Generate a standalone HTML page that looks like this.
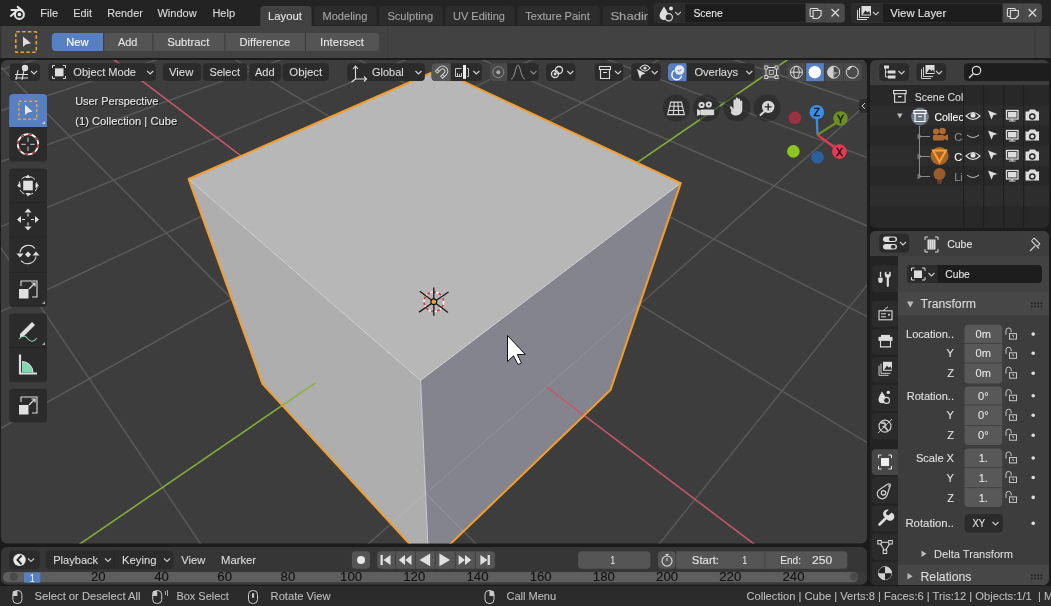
<!DOCTYPE html><html><head><meta charset="utf-8"><style>html,body{margin:0;padding:0;background:#1b1b1b;overflow:hidden}svg{display:block;will-change:transform}text{font-family:"Liberation Sans",sans-serif}</style></head><body>
<svg width="1051" height="606" viewBox="0 0 1051 606">
<defs><clipPath id="vp"><rect x="1" y="60" width="866" height="483.6" rx="6"/></clipPath><clipPath id="ol"><rect x="870" y="60" width="179" height="168" rx="6"/></clipPath><clipPath id="pp"><rect x="870" y="231" width="179" height="354" rx="6"/></clipPath><clipPath id="tl"><rect x="1" y="547" width="866" height="37.5" rx="6"/></clipPath></defs>
<rect x="0.00" y="0.00" width="1051.00" height="606.00" rx="0.00" fill="#1b1b1b" />
<rect x="0.00" y="0.00" width="1051.00" height="26.00" rx="0.00" fill="#232323" />
<g stroke="#e6e6e6" stroke-width="2" fill="none" stroke-linecap="round"><circle cx="19.4" cy="14.4" r="4.5"/><path d="M11.4 9.9 H19.5 M17.6 6.9 L22.2 10.6 M10.9 15.9 L15.4 12.1"/></g><circle cx="19.4" cy="14.4" r="1.9" fill="#e6e6e6"/>
<text x="40.30" y="16.80" font-size="11.70" fill="#dcdcdc" stroke="#dcdcdc" stroke-width="0.1" textLength="17.89" lengthAdjust="spacingAndGlyphs">File</text>
<text x="73.30" y="16.80" font-size="11.70" fill="#dcdcdc" stroke="#dcdcdc" stroke-width="0.1" textLength="18.71" lengthAdjust="spacingAndGlyphs">Edit</text>
<text x="107.20" y="16.80" font-size="11.70" fill="#dcdcdc" stroke="#dcdcdc" stroke-width="0.1" textLength="35.60" lengthAdjust="spacingAndGlyphs">Render</text>
<text x="157.40" y="16.80" font-size="11.70" fill="#dcdcdc" stroke="#dcdcdc" stroke-width="0.1" textLength="39.36" lengthAdjust="spacingAndGlyphs">Window</text>
<text x="212.40" y="16.80" font-size="11.70" fill="#dcdcdc" stroke="#dcdcdc" stroke-width="0.1" textLength="22.69" lengthAdjust="spacingAndGlyphs">Help</text>
<path d="M260.3 26 L260.3 10 Q260.3 6 264.3 6 L307.6 6 Q311.6 6 311.6 10 L311.6 26 Z" fill="#424242"/>
<path d="M314.2 25 L314.2 10 Q314.2 6 318.2 6 L372.6 6 Q376.6 6 376.6 10 L376.6 25 Z" fill="#2c2c2c"/>
<path d="M379.2 25 L379.2 10 Q379.2 6 383.2 6 L438.7 6 Q442.7 6 442.7 10 L442.7 25 Z" fill="#2c2c2c"/>
<path d="M445.2 25 L445.2 10 Q445.2 6 449.2 6 L510.4 6 Q514.4 6 514.4 10 L514.4 25 Z" fill="#2c2c2c"/>
<path d="M517.5 25 L517.5 10 Q517.5 6 521.5 6 L595.9 6 Q599.9 6 599.9 10 L599.9 25 Z" fill="#2c2c2c"/>
<path d="M602.8 25 L602.8 10 Q602.8 6 606.8 6 L644.0 6 Q648.0 6 648.0 10 L648.0 25 Z" fill="#2c2c2c"/>
<clipPath id="shc"><rect x="600" y="0" width="48" height="26"/></clipPath>
<text x="268.00" y="19.50" font-size="11.70" fill="#e6e6e6" stroke="#e6e6e6" stroke-width="0.1" textLength="34.00" lengthAdjust="spacingAndGlyphs">Layout</text>
<text x="322.40" y="19.50" font-size="11.70" fill="#a6a6a6" stroke="#a6a6a6" stroke-width="0.1" textLength="45.01" lengthAdjust="spacingAndGlyphs">Modeling</text>
<text x="387.40" y="19.50" font-size="11.70" fill="#a6a6a6" stroke="#a6a6a6" stroke-width="0.1" textLength="45.69" lengthAdjust="spacingAndGlyphs">Sculpting</text>
<text x="453.00" y="19.50" font-size="11.70" fill="#a6a6a6" stroke="#a6a6a6" stroke-width="0.1" textLength="52.00" lengthAdjust="spacingAndGlyphs">UV Editing</text>
<text x="525.30" y="19.50" font-size="11.70" fill="#a6a6a6" stroke="#a6a6a6" stroke-width="0.1" textLength="64.49" lengthAdjust="spacingAndGlyphs">Texture Paint</text>
<g clip-path="url(#shc)">
<text x="610.40" y="19.50" font-size="11.70" fill="#a6a6a6" stroke="#a6a6a6" stroke-width="0.1" textLength="48.00" lengthAdjust="spacingAndGlyphs">Shading</text>
</g>
<rect x="654.20" y="3.20" width="190.80" height="19.60" rx="4.00" fill="#3a3a3a" />
<rect x="654.70" y="3.70" width="30.50" height="18.60" rx="3.50" fill="#2c2c2c" />
<rect x="681.20" y="3.70" width="4.00" height="18.60" rx="0.00" fill="#2c2c2c" />
<rect x="685.20" y="3.70" width="120.50" height="18.60" rx="0.00" fill="#1d1d1d" />
<rect x="805.70" y="3.70" width="19.30" height="18.60" rx="0.00" fill="#4a4a4a" />
<rect x="825.50" y="3.70" width="19.00" height="18.60" rx="3.50" fill="#4a4a4a" />
<rect x="825.50" y="3.70" width="4.00" height="18.60" rx="0.00" fill="#4a4a4a" />
<text x="693.40" y="16.90" font-size="11.70" fill="#e6e6e6" stroke="#e6e6e6" stroke-width="0.1" textLength="29.51" lengthAdjust="spacingAndGlyphs">Scene</text>
<g fill="none" stroke="#dddddd" stroke-width="1.1"><rect x="810.1" y="8.5" width="8" height="8" rx="1"/><path d="M813.1 10.5 h8 v5 l-3 3 h-5 z" fill="#4a4a4a"/></g>
<path d="M831.5 9 l7.5 7.5 M831.5 16.5 l7.5 -7.5" stroke="#dddddd" stroke-width="1.2"/>
<path d="M675.2 12 l2.8 2.8 l2.8 -2.8" stroke="#cccccc" stroke-width="1.1" fill="none"/>
<path d="M664 6.5 C662 10 659.5 13 659.5 15.5 a4.5 4.5 0 0 0 9 0 C668.5 13 666 10 664 6.5z" fill="#dddddd"/><circle cx="671" cy="8.5" r="2" fill="#dddddd"/><circle cx="668.8" cy="17.3" r="3.6" fill="#2c2c2c" stroke="#dddddd" stroke-width="1.2"/>
<rect x="851.50" y="3.20" width="190.50" height="19.60" rx="4.00" fill="#3a3a3a" />
<rect x="852.00" y="3.70" width="31.00" height="18.60" rx="3.50" fill="#2c2c2c" />
<rect x="879.00" y="3.70" width="4.00" height="18.60" rx="0.00" fill="#2c2c2c" />
<rect x="883.00" y="3.70" width="119.70" height="18.60" rx="0.00" fill="#1d1d1d" />
<rect x="1002.70" y="3.70" width="19.80" height="18.60" rx="0.00" fill="#4a4a4a" />
<rect x="1023.00" y="3.70" width="18.50" height="18.60" rx="3.50" fill="#4a4a4a" />
<rect x="1023.00" y="3.70" width="4.00" height="18.60" rx="0.00" fill="#4a4a4a" />
<text x="890.20" y="16.90" font-size="11.70" fill="#e6e6e6" stroke="#e6e6e6" stroke-width="0.1" textLength="55.99" lengthAdjust="spacingAndGlyphs">View Layer</text>
<g fill="none" stroke="#dddddd" stroke-width="1.1"><rect x="1007.4" y="8.5" width="8" height="8" rx="1"/><path d="M1010.4 10.5 h8 v5 l-3 3 h-5 z" fill="#4a4a4a"/></g>
<path d="M1028.7 9 l7.5 7.5 M1028.7 16.5 l7.5 -7.5" stroke="#dddddd" stroke-width="1.2"/>
<path d="M873.0 12 l2.8 2.8 l2.8 -2.8" stroke="#cccccc" stroke-width="1.1" fill="none"/>
<g fill="none" stroke="#dddddd" stroke-width="1"><path d="M857.5 10 v9.5 h9.5"/><path d="M859.5 8 v9.5 h9.5"/></g><rect x="861.5" y="6" width="9.5" height="9.5" fill="#dddddd"/><path d="M862.5 14.5 l3 -4 l2 2 l1.5 -1.5 l1.5 3.5 z" fill="#2c2c2c"/>
<rect x="0.00" y="26.00" width="1051.00" height="32.00" rx="0.00" fill="#424242" />
<rect x="0.00" y="26.00" width="1.50" height="32.00" rx="0.00" fill="#353535" />
<rect x="1049.50" y="26.00" width="1.50" height="32.00" rx="0.00" fill="#353535" />
<rect x="1034.50" y="26.00" width="1.00" height="32.00" rx="0.00" fill="#383838" />
<rect x="387.00" y="26.00" width="1.00" height="32.00" rx="0.00" fill="#3b3b3b" />
<rect x="15.8" y="31.8" width="20.5" height="20.5" fill="none" stroke="#f0a030" stroke-width="1.6" stroke-dasharray="3.5 2.3" rx="0.5"/>
<path d="M23 36.5 L23 47 L25.6 44.6 L31 43.2 Z" fill="#dcdcdc"/>
<rect x="51.80" y="33.00" width="327.40" height="18.00" rx="4.00" fill="#545454" />
<path d="M55.8 33 H103.4 V51 H55.8 Q51.8 51 51.8 47 V37 Q51.8 33 55.8 33 Z" fill="#5680c2"/>
<rect x="103.20" y="33.00" width="1.00" height="18.00" rx="0.00" fill="#3a3a3a" />
<rect x="152.40" y="33.00" width="1.00" height="18.00" rx="0.00" fill="#3a3a3a" />
<rect x="224.40" y="33.00" width="1.00" height="18.00" rx="0.00" fill="#3a3a3a" />
<rect x="304.90" y="33.00" width="1.00" height="18.00" rx="0.00" fill="#3a3a3a" />
<text x="66.20" y="45.70" font-size="11.70" fill="#ffffff" stroke="#ffffff" stroke-width="0.1" textLength="22.28" lengthAdjust="spacingAndGlyphs">New</text>
<text x="118.00" y="45.70" font-size="11.70" fill="#e6e6e6" stroke="#e6e6e6" stroke-width="0.1" textLength="19.39" lengthAdjust="spacingAndGlyphs">Add</text>
<text x="167.20" y="45.70" font-size="11.70" fill="#e6e6e6" stroke="#e6e6e6" stroke-width="0.1" textLength="42.09" lengthAdjust="spacingAndGlyphs">Subtract</text>
<text x="239.50" y="45.70" font-size="11.70" fill="#e6e6e6" stroke="#e6e6e6" stroke-width="0.1" textLength="50.70" lengthAdjust="spacingAndGlyphs">Difference</text>
<text x="320.10" y="45.70" font-size="11.70" fill="#e6e6e6" stroke="#e6e6e6" stroke-width="0.1" textLength="43.80" lengthAdjust="spacingAndGlyphs">Intersect</text>
<g clip-path="url(#vp)">
<rect x="0.00" y="60.00" width="867.00" height="485.00" rx="0.00" fill="#3d3d3d" />
<g stroke="#5a5a5a" stroke-width="1.45" fill="none">
<path d="M-7466.4 192.2 L458.9 -281.8"/>
<path d="M-8072.3 235.2 L465.7 -281.6"/>
<path d="M-8791.4 286.3 L472.6 -281.4"/>
<path d="M-9658.8 347.9 L479.7 -281.1"/>
<path d="M-10725.5 423.7 L486.8 -280.9"/>
<path d="M-12069.2 519.1 L494.1 -280.6"/>
<path d="M-13814.0 643.1 L501.5 -280.3"/>
<path d="M-16170.7 810.5 L509.0 -280.1"/>
<path d="M-19529.9 1049.1 L516.7 -279.8"/>
<path d="M-24704.1 1416.7 L524.4 -279.5"/>
<path d="M-33708.5 2056.3 L532.4 -279.2"/>
<path d="M-53295.6 3447.7 L540.4 -279.0"/>
<path d="M-128708.3 8804.8 L548.6 -278.7"/>
<path d="M-54560822.7 3893603.2 L557.0 -278.4"/>
<path d="M-53499065.6 3878602.6 L565.5 -278.1"/>
<path d="M-52437308.4 3863602.0 L574.2 -277.8"/>
<path d="M-51375551.2 3848601.4 L583.0 -277.4"/>
<path d="M-50313794.0 3833600.8 L592.0 -277.1"/>
<path d="M-49252036.8 3818600.1 L601.2 -276.8"/>
<path d="M-48190279.6 3803599.5 L610.5 -276.5"/>
<path d="M-47128522.4 3788598.9 L620.0 -276.1"/>
<path d="M-46066765.2 3773598.3 L629.7 -275.8"/>
<path d="M-45005008.0 3758597.7 L639.6 -275.4"/>
<path d="M-43943250.8 3743597.0 L649.7 -275.1"/>
<path d="M-42881493.6 3728596.4 L660.0 -274.7"/>
<path d="M-41819736.5 3713595.8 L670.5 -274.3"/>
<path d="M-40757979.3 3698595.2 L681.2 -274.0"/>
<path d="M-39696222.1 3683594.6 L692.1 -273.6"/>
<path d="M-38634464.9 3668593.9 L703.3 -273.2"/>
<path d="M-37572707.7 3653593.3 L714.7 -272.8"/>
<path d="M-36510950.5 3638592.7 L726.4 -272.4"/>
<path d="M-35449193.3 3623592.1 L738.3 -271.9"/>
<path d="M-34387436.1 3608591.5 L750.4 -271.5"/>
<path d="M-33325678.9 3593590.9 L762.8 -271.1"/>
<path d="M-32263921.7 3578590.2 L775.5 -270.6"/>
<path d="M-31202164.6 3563589.6 L788.5 -270.2"/>
<path d="M-30140407.4 3548589.0 L801.8 -269.7"/>
<path d="M-29078650.2 3533588.4 L815.4 -269.2"/>
<path d="M-28016893.0 3518587.8 L829.3 -268.7"/>
<path d="M-26955135.8 3503587.1 L843.5 -268.2"/>
<path d="M-25893378.6 3488586.5 L858.1 -267.7"/>
<path d="M-24831621.4 3473585.9 L873.0 -267.2"/>
<path d="M-23769864.2 3458585.3 L888.3 -266.6"/>
<path d="M-22708107.0 3443584.7 L904.0 -266.1"/>
<path d="M-21646349.8 3428584.0 L920.1 -265.5"/>
<path d="M-20584592.7 3413583.4 L936.5 -264.9"/>
<path d="M-19522835.5 3398582.8 L953.4 -264.3"/>
<path d="M-18461078.3 3383582.2 L970.8 -263.7"/>
<path d="M-17399321.1 3368581.6 L988.6 -263.1"/>
<path d="M-16337563.9 3353581.0 L1006.9 -262.4"/>
<path d="M-15275806.7 3338580.3 L1025.6 -261.8"/>
<path d="M-14214049.5 3323579.7 L1044.9 -261.1"/>
<path d="M-13152292.3 3308579.1 L1064.7 -260.4"/>
<path d="M-12090535.1 3293578.5 L1085.1 -259.6"/>
<path d="M-11028777.9 3278577.9 L1106.1 -258.9"/>
<path d="M-9967020.8 3263577.2 L1127.7 -258.1"/>
<path d="M-8905263.6 3248576.6 L1149.9 -257.3"/>
<path d="M-7843506.4 3233576.0 L1172.8 -256.5"/>
<path d="M-6781749.2 3218575.4 L1196.3 -255.7"/>
<path d="M-5719992.0 3203574.8 L1220.6 -254.8"/>
<path d="M-3596477.6 3173573.5 L1271.6 -253.0"/>
<path d="M-2534720.4 3158572.9 L1298.3 -252.1"/>
<path d="M-1472963.2 3143572.3 L1325.9 -251.1"/>
<path d="M-411206.0 3128571.7 L1354.4 -250.1"/>
<path d="M650551.1 3113571.0 L1383.9 -249.0"/>
<path d="M1712308.3 3098570.4 L1414.4 -248.0"/>
<path d="M2774065.5 3083569.8 L1446.0 -246.8"/>
<path d="M3835822.7 3068569.2 L1478.7 -245.7"/>
<path d="M4897579.9 3053568.6 L1512.6 -244.5"/>
<path d="M5959337.1 3038568.0 L1547.8 -243.2"/>
<path d="M7021094.3 3023567.3 L1584.3 -241.9"/>
<path d="M8082851.5 3008566.7 L1622.2 -240.6"/>
<path d="M9144608.7 2993566.1 L1661.6 -239.2"/>
<path d="M10206365.9 2978565.5 L1702.6 -237.7"/>
<path d="M11268123.0 2963564.9 L1745.3 -236.2"/>
<path d="M12329880.2 2948564.2 L1789.8 -234.7"/>
<path d="M13391637.4 2933563.6 L1836.2 -233.0"/>
<path d="M14453394.6 2918563.0 L1884.6 -231.3"/>
<path d="M15515151.8 2903562.4 L1935.2 -229.5"/>
<path d="M16576909.0 2888561.8 L1988.0 -227.6"/>
<path d="M17638666.2 2873561.1 L2043.4 -225.7"/>
<path d="M18700423.4 2858560.5 L2101.4 -223.6"/>
<path d="M19762180.6 2843559.9 L2162.3 -221.4"/>
<path d="M20823937.8 2828559.3 L2226.2 -219.2"/>
<path d="M21885694.9 2813558.7 L2293.5 -216.8"/>
<path d="M22947452.1 2798558.1 L2364.3 -214.3"/>
<path d="M24009209.3 2783557.4 L2439.0 -211.6"/>
<path d="M25070966.5 2768556.8 L2517.8 -208.8"/>
<path d="M26132723.7 2753556.2 L2601.2 -205.9"/>
<path d="M27194480.9 2738555.6 L2689.5 -202.8"/>
<path d="M28256238.1 2723555.0 L2783.3 -199.4"/>
<path d="M29317995.3 2708554.3 L2882.9 -195.9"/>
<path d="M30379752.5 2693553.7 L2989.1 -192.1"/>
<path d="M31441509.7 2678553.1 L3102.4 -188.1"/>
<path d="M32503266.8 2663552.5 L3223.6 -183.8"/>
<path d="M33565024.0 2648551.9 L3353.5 -179.2"/>
<path d="M34626781.2 2633551.2 L3493.2 -174.3"/>
<path d="M35688538.4 2618550.6 L3643.7 -168.9"/>
<path d="M36750295.6 2603550.0 L3806.4 -163.1"/>
<path d="M37812052.8 2588549.4 L3982.8 -156.9"/>
<path d="M38873810.0 2573548.8 L4174.8 -150.1"/>
<path d="M39935567.2 2558548.1 L4384.5 -142.7"/>
<path d="M40997324.4 2543547.5 L4614.4 -134.5"/>
<path d="M42059081.6 2528546.9 L4867.6 -125.5"/>
<path d="M43120838.7 2513546.3 L5148.0 -115.6"/>
<path d="M44182595.9 2498545.7 L5459.9 -104.5"/>
<path d="M45244353.1 2483545.1 L5809.3 -92.1"/>
<path d="M46306110.3 2468544.4 L6203.1 -78.2"/>
<path d="M47367867.5 2453543.8 L6650.4 -62.3"/>
<path d="M48429624.7 2438543.2 L7163.1 -44.1"/>
<path d="M49491381.9 2423542.6 L7756.4 -23.1"/>
<path d="M50553139.1 2408542.0 L8451.0 1.5"/>
<path d="M51614896.3 2393541.3 L9275.4 30.8"/>
<path d="M52676653.5 2378540.7 L10269.7 66.0"/>
<path d="M53738410.6 2363540.1 L11492.3 109.4"/>
<path d="M54800167.8 2348539.5 L13032.1 164.0"/>
<path d="M55861925.0 2333538.9 L15031.1 234.9"/>
<path d="M56923682.2 2318538.2 L17730.5 330.6"/>
<path d="M57985439.4 2303537.6 L21576.6 467.0"/>
<path d="M59047196.6 2288537.0 L27497.4 676.9"/>
<path d="M-7466.4 192.2 L-54879259.0 3898102.1"/>
<path d="M-6866.9 156.3 L-53897079.7 3884225.8"/>
<path d="M-6343.5 125.0 L-52914900.3 3870349.5"/>
<path d="M-5882.7 97.5 L-51932721.0 3856473.1"/>
<path d="M-5473.9 73.0 L-50950541.7 3842596.8"/>
<path d="M-5108.8 51.2 L-49968362.4 3828720.5"/>
<path d="M-4780.6 31.5 L-48986183.0 3814844.1"/>
<path d="M-4484.2 13.8 L-48004003.7 3800967.8"/>
<path d="M-4215.0 -2.3 L-47021824.4 3787091.5"/>
<path d="M-3969.4 -17.0 L-46039645.0 3773215.1"/>
<path d="M-3744.6 -30.4 L-45057465.7 3759338.8"/>
<path d="M-3538.0 -42.8 L-44075286.4 3745462.5"/>
<path d="M-3347.4 -54.2 L-43093107.1 3731586.1"/>
<path d="M-3171.1 -64.7 L-42110927.7 3717709.8"/>
<path d="M-3007.5 -74.5 L-41128748.4 3703833.5"/>
<path d="M-2855.3 -83.6 L-40146569.1 3689957.1"/>
<path d="M-2713.3 -92.1 L-39164389.8 3676080.8"/>
<path d="M-2580.6 -100.1 L-38182210.4 3662204.4"/>
<path d="M-2456.2 -107.5 L-37200031.1 3648328.1"/>
<path d="M-2339.4 -114.5 L-36217851.8 3634451.8"/>
<path d="M-2229.6 -121.0 L-35235672.4 3620575.4"/>
<path d="M-2126.1 -127.2 L-34253493.1 3606699.1"/>
<path d="M-2028.3 -133.1 L-33271313.8 3592822.8"/>
<path d="M-1935.9 -138.6 L-32289134.5 3578946.4"/>
<path d="M-1848.4 -143.8 L-31306955.1 3565070.1"/>
<path d="M-1765.4 -148.8 L-30324775.8 3551193.8"/>
<path d="M-1686.6 -153.5 L-29342596.5 3537317.4"/>
<path d="M-1611.7 -158.0 L-28360417.2 3523441.1"/>
<path d="M-1540.3 -162.3 L-27378237.8 3509564.8"/>
<path d="M-1472.3 -166.3 L-26396058.5 3495688.4"/>
<path d="M-1407.4 -170.2 L-25413879.2 3481812.1"/>
<path d="M-1345.4 -173.9 L-24431699.8 3467935.8"/>
<path d="M-1286.2 -177.5 L-23449520.5 3454059.4"/>
<path d="M-1229.4 -180.9 L-22467341.2 3440183.1"/>
<path d="M-1175.0 -184.1 L-21485161.9 3426306.8"/>
<path d="M-1122.9 -187.2 L-20502982.5 3412430.4"/>
<path d="M-1072.9 -190.2 L-19520803.2 3398554.1"/>
<path d="M-1024.8 -193.1 L-18538623.9 3384677.8"/>
<path d="M-978.6 -195.9 L-17556444.6 3370801.4"/>
<path d="M-934.1 -198.5 L-16574265.2 3356925.1"/>
<path d="M-891.3 -201.1 L-15592085.9 3343048.8"/>
<path d="M-850.1 -203.6 L-14609906.6 3329172.4"/>
<path d="M-810.3 -205.9 L-13627727.2 3315296.1"/>
<path d="M-772.0 -208.2 L-12645547.9 3301419.8"/>
<path d="M-734.9 -210.4 L-11663368.6 3287543.4"/>
<path d="M-699.2 -212.6 L-10681189.3 3273667.1"/>
<path d="M-664.6 -214.6 L-9699009.9 3259790.8"/>
<path d="M-631.2 -216.6 L-8716830.6 3245914.4"/>
<path d="M-598.8 -218.6 L-7734651.3 3232038.1"/>
<path d="M-567.5 -220.5 L-6752472.0 3218161.7"/>
<path d="M-537.2 -222.3 L-5770292.6 3204285.4"/>
<path d="M-507.8 -224.0 L-4788113.3 3190409.1"/>
<path d="M-479.3 -225.7 L-3805934.0 3176532.7"/>
<path d="M-451.6 -227.4 L-2823754.6 3162656.4"/>
<path d="M-424.8 -229.0 L-1841575.3 3148780.1"/>
<path d="M-398.7 -230.6 L-859396.0 3134903.7"/>
<path d="M-373.4 -232.1 L122783.3 3121027.4"/>
<path d="M-348.8 -233.5 L1104962.7 3107151.1"/>
<path d="M-324.9 -235.0 L2087142.0 3093274.7"/>
<path d="M-301.7 -236.4 L3069321.3 3079398.4"/>
<path d="M-257.1 -239.0 L5033680.0 3051645.7"/>
<path d="M-235.6 -240.3 L6015859.3 3037769.4"/>
<path d="M-214.8 -241.6 L6998038.6 3023893.1"/>
<path d="M-194.4 -242.8 L7980218.0 3010016.7"/>
<path d="M-174.6 -244.0 L8962397.3 2996140.4"/>
<path d="M-155.3 -245.1 L9944576.6 2982264.1"/>
<path d="M-136.5 -246.2 L10926755.9 2968387.7"/>
<path d="M-118.1 -247.3 L11908935.3 2954511.4"/>
<path d="M-100.1 -248.4 L12891114.6 2940635.1"/>
<path d="M-82.6 -249.5 L13873293.9 2926758.7"/>
<path d="M-65.5 -250.5 L14855473.2 2912882.4"/>
<path d="M-48.8 -251.5 L15837652.6 2899006.1"/>
<path d="M-32.5 -252.5 L16819831.9 2885129.7"/>
<path d="M-16.6 -253.4 L17802011.2 2871253.4"/>
<path d="M-1.0 -254.3 L18784190.6 2857377.1"/>
<path d="M14.2 -255.2 L19766369.9 2843500.7"/>
<path d="M29.1 -256.1 L20748549.2 2829624.4"/>
<path d="M43.7 -257.0 L21730728.5 2815748.1"/>
<path d="M57.9 -257.9 L22712907.9 2801871.7"/>
<path d="M71.9 -258.7 L23695087.2 2787995.4"/>
<path d="M85.6 -259.5 L24677266.5 2774119.0"/>
<path d="M98.9 -260.3 L25659445.8 2760242.7"/>
<path d="M112.0 -261.1 L26641625.2 2746366.4"/>
<path d="M124.8 -261.9 L27623804.5 2732490.0"/>
<path d="M137.4 -262.6 L28605983.8 2718613.7"/>
<path d="M149.7 -263.4 L29588163.2 2704737.4"/>
<path d="M161.8 -264.1 L30570342.5 2690861.0"/>
<path d="M173.6 -264.8 L31552521.8 2676984.7"/>
<path d="M185.2 -265.5 L32534701.1 2663108.4"/>
<path d="M196.6 -266.2 L33516880.5 2649232.0"/>
<path d="M207.8 -266.8 L34499059.8 2635355.7"/>
<path d="M218.7 -267.5 L35481239.1 2621479.4"/>
<path d="M229.5 -268.1 L36463418.4 2607603.0"/>
<path d="M240.0 -268.8 L37445597.8 2593726.7"/>
<path d="M250.4 -269.4 L38427777.1 2579850.4"/>
<path d="M260.6 -270.0 L39409956.4 2565974.0"/>
<path d="M270.5 -270.6 L40392135.8 2552097.7"/>
<path d="M280.3 -271.2 L41374315.1 2538221.4"/>
<path d="M290.0 -271.7 L42356494.4 2524345.0"/>
<path d="M299.4 -272.3 L43338673.7 2510468.7"/>
<path d="M308.7 -272.9 L44320853.1 2496592.4"/>
<path d="M317.8 -273.4 L45303032.4 2482716.0"/>
<path d="M326.8 -273.9 L46285211.7 2468839.7"/>
<path d="M335.7 -274.5 L47267391.0 2454963.4"/>
<path d="M344.3 -275.0 L48249570.4 2441087.0"/>
<path d="M352.9 -275.5 L49231749.7 2427210.7"/>
<path d="M361.2 -276.0 L50213929.0 2413334.4"/>
<path d="M369.5 -276.5 L51196108.3 2399458.0"/>
<path d="M377.6 -277.0 L52178287.7 2385581.7"/>
<path d="M385.6 -277.5 L53160467.0 2371705.4"/>
<path d="M393.5 -277.9 L54142646.3 2357829.0"/>
<path d="M401.2 -278.4 L55124825.7 2343952.7"/>
<path d="M408.8 -278.8 L56107005.0 2330076.3"/>
<path d="M416.3 -279.3 L57089184.3 2316200.0"/>
<path d="M423.7 -279.7 L58071363.6 2302323.7"/>
<path d="M430.9 -280.2 L12719805.3 492685.9"/>
<path d="M438.1 -280.6 L105252.1 3691.0"/>
<path d="M445.1 -281.0 L53521.9 1685.7"/>
<path d="M452.1 -281.4 L36184.1 1013.6"/>
<path d="M458.9 -281.8 L27497.4 676.9"/>
</g>
<path d="M-279.1 -237.7 L4051500.6 3065522.1" stroke="#c4566a" stroke-width="1.6"/>
<path d="M-4658234.8 3188574.1 L1245.7 -253.9" stroke="#80ac3a" stroke-width="1.6"/>
<path d="M438.30 69.72 L680.78 183.16 L420.61 380.40 L188.56 179.00 Z" fill="#b7b7b7" />
<path d="M188.56 179.00 L420.61 380.40 L428.74 564.80 L262.51 383.92 Z" fill="#aeaeae" />
<path d="M420.61 380.40 L680.78 183.16 L610.48 390.07 L428.74 564.80 Z" fill="#84848f" />
<clipPath id="belowL"><path d="M231.83 298.90 L425.59 493.29 L428.74 564.80 L262.51 383.92 Z"/></clipPath>
<g clip-path="url(#belowL)"><g stroke="#ffffff" stroke-width="1.2" opacity="0.07" fill="none"><path d="M-7466.4 192.2 L458.9 -281.8"/><path d="M-8072.3 235.2 L465.7 -281.6"/><path d="M-8791.4 286.3 L472.6 -281.4"/><path d="M-9658.8 347.9 L479.7 -281.1"/><path d="M-10725.5 423.7 L486.8 -280.9"/><path d="M-12069.2 519.1 L494.1 -280.6"/><path d="M-13814.0 643.1 L501.5 -280.3"/><path d="M-16170.7 810.5 L509.0 -280.1"/><path d="M-19529.9 1049.1 L516.7 -279.8"/><path d="M-24704.1 1416.7 L524.4 -279.5"/><path d="M-33708.5 2056.3 L532.4 -279.2"/><path d="M-53295.6 3447.7 L540.4 -279.0"/><path d="M-128708.3 8804.8 L548.6 -278.7"/><path d="M-54560822.7 3893603.2 L557.0 -278.4"/><path d="M-53499065.6 3878602.6 L565.5 -278.1"/><path d="M-52437308.4 3863602.0 L574.2 -277.8"/><path d="M-51375551.2 3848601.4 L583.0 -277.4"/><path d="M-50313794.0 3833600.8 L592.0 -277.1"/><path d="M-49252036.8 3818600.1 L601.2 -276.8"/><path d="M-48190279.6 3803599.5 L610.5 -276.5"/><path d="M-47128522.4 3788598.9 L620.0 -276.1"/><path d="M-46066765.2 3773598.3 L629.7 -275.8"/><path d="M-45005008.0 3758597.7 L639.6 -275.4"/><path d="M-43943250.8 3743597.0 L649.7 -275.1"/><path d="M-42881493.6 3728596.4 L660.0 -274.7"/><path d="M-41819736.5 3713595.8 L670.5 -274.3"/><path d="M-40757979.3 3698595.2 L681.2 -274.0"/><path d="M-39696222.1 3683594.6 L692.1 -273.6"/><path d="M-38634464.9 3668593.9 L703.3 -273.2"/><path d="M-37572707.7 3653593.3 L714.7 -272.8"/><path d="M-36510950.5 3638592.7 L726.4 -272.4"/><path d="M-35449193.3 3623592.1 L738.3 -271.9"/><path d="M-34387436.1 3608591.5 L750.4 -271.5"/><path d="M-33325678.9 3593590.9 L762.8 -271.1"/><path d="M-32263921.7 3578590.2 L775.5 -270.6"/><path d="M-31202164.6 3563589.6 L788.5 -270.2"/><path d="M-30140407.4 3548589.0 L801.8 -269.7"/><path d="M-29078650.2 3533588.4 L815.4 -269.2"/><path d="M-28016893.0 3518587.8 L829.3 -268.7"/><path d="M-26955135.8 3503587.1 L843.5 -268.2"/><path d="M-25893378.6 3488586.5 L858.1 -267.7"/><path d="M-24831621.4 3473585.9 L873.0 -267.2"/><path d="M-23769864.2 3458585.3 L888.3 -266.6"/><path d="M-22708107.0 3443584.7 L904.0 -266.1"/><path d="M-21646349.8 3428584.0 L920.1 -265.5"/><path d="M-20584592.7 3413583.4 L936.5 -264.9"/><path d="M-19522835.5 3398582.8 L953.4 -264.3"/><path d="M-18461078.3 3383582.2 L970.8 -263.7"/><path d="M-17399321.1 3368581.6 L988.6 -263.1"/><path d="M-16337563.9 3353581.0 L1006.9 -262.4"/><path d="M-15275806.7 3338580.3 L1025.6 -261.8"/><path d="M-14214049.5 3323579.7 L1044.9 -261.1"/><path d="M-13152292.3 3308579.1 L1064.7 -260.4"/><path d="M-12090535.1 3293578.5 L1085.1 -259.6"/><path d="M-11028777.9 3278577.9 L1106.1 -258.9"/><path d="M-9967020.8 3263577.2 L1127.7 -258.1"/><path d="M-8905263.6 3248576.6 L1149.9 -257.3"/><path d="M-7843506.4 3233576.0 L1172.8 -256.5"/><path d="M-6781749.2 3218575.4 L1196.3 -255.7"/><path d="M-5719992.0 3203574.8 L1220.6 -254.8"/><path d="M-3596477.6 3173573.5 L1271.6 -253.0"/><path d="M-2534720.4 3158572.9 L1298.3 -252.1"/><path d="M-1472963.2 3143572.3 L1325.9 -251.1"/><path d="M-411206.0 3128571.7 L1354.4 -250.1"/><path d="M650551.1 3113571.0 L1383.9 -249.0"/><path d="M1712308.3 3098570.4 L1414.4 -248.0"/><path d="M2774065.5 3083569.8 L1446.0 -246.8"/><path d="M3835822.7 3068569.2 L1478.7 -245.7"/><path d="M4897579.9 3053568.6 L1512.6 -244.5"/><path d="M5959337.1 3038568.0 L1547.8 -243.2"/><path d="M7021094.3 3023567.3 L1584.3 -241.9"/><path d="M8082851.5 3008566.7 L1622.2 -240.6"/><path d="M9144608.7 2993566.1 L1661.6 -239.2"/><path d="M10206365.9 2978565.5 L1702.6 -237.7"/><path d="M11268123.0 2963564.9 L1745.3 -236.2"/><path d="M12329880.2 2948564.2 L1789.8 -234.7"/><path d="M13391637.4 2933563.6 L1836.2 -233.0"/><path d="M14453394.6 2918563.0 L1884.6 -231.3"/><path d="M15515151.8 2903562.4 L1935.2 -229.5"/><path d="M16576909.0 2888561.8 L1988.0 -227.6"/><path d="M17638666.2 2873561.1 L2043.4 -225.7"/><path d="M18700423.4 2858560.5 L2101.4 -223.6"/><path d="M19762180.6 2843559.9 L2162.3 -221.4"/><path d="M20823937.8 2828559.3 L2226.2 -219.2"/><path d="M21885694.9 2813558.7 L2293.5 -216.8"/><path d="M22947452.1 2798558.1 L2364.3 -214.3"/><path d="M24009209.3 2783557.4 L2439.0 -211.6"/><path d="M25070966.5 2768556.8 L2517.8 -208.8"/><path d="M26132723.7 2753556.2 L2601.2 -205.9"/><path d="M27194480.9 2738555.6 L2689.5 -202.8"/><path d="M28256238.1 2723555.0 L2783.3 -199.4"/><path d="M29317995.3 2708554.3 L2882.9 -195.9"/><path d="M30379752.5 2693553.7 L2989.1 -192.1"/><path d="M31441509.7 2678553.1 L3102.4 -188.1"/><path d="M32503266.8 2663552.5 L3223.6 -183.8"/><path d="M33565024.0 2648551.9 L3353.5 -179.2"/><path d="M34626781.2 2633551.2 L3493.2 -174.3"/><path d="M35688538.4 2618550.6 L3643.7 -168.9"/><path d="M36750295.6 2603550.0 L3806.4 -163.1"/><path d="M37812052.8 2588549.4 L3982.8 -156.9"/><path d="M38873810.0 2573548.8 L4174.8 -150.1"/><path d="M39935567.2 2558548.1 L4384.5 -142.7"/><path d="M40997324.4 2543547.5 L4614.4 -134.5"/><path d="M42059081.6 2528546.9 L4867.6 -125.5"/><path d="M43120838.7 2513546.3 L5148.0 -115.6"/><path d="M44182595.9 2498545.7 L5459.9 -104.5"/><path d="M45244353.1 2483545.1 L5809.3 -92.1"/><path d="M46306110.3 2468544.4 L6203.1 -78.2"/><path d="M47367867.5 2453543.8 L6650.4 -62.3"/><path d="M48429624.7 2438543.2 L7163.1 -44.1"/><path d="M49491381.9 2423542.6 L7756.4 -23.1"/><path d="M50553139.1 2408542.0 L8451.0 1.5"/><path d="M51614896.3 2393541.3 L9275.4 30.8"/><path d="M52676653.5 2378540.7 L10269.7 66.0"/><path d="M53738410.6 2363540.1 L11492.3 109.4"/><path d="M54800167.8 2348539.5 L13032.1 164.0"/><path d="M55861925.0 2333538.9 L15031.1 234.9"/><path d="M56923682.2 2318538.2 L17730.5 330.6"/><path d="M57985439.4 2303537.6 L21576.6 467.0"/><path d="M59047196.6 2288537.0 L27497.4 676.9"/><path d="M-7466.4 192.2 L-54879259.0 3898102.1"/><path d="M-6866.9 156.3 L-53897079.7 3884225.8"/><path d="M-6343.5 125.0 L-52914900.3 3870349.5"/><path d="M-5882.7 97.5 L-51932721.0 3856473.1"/><path d="M-5473.9 73.0 L-50950541.7 3842596.8"/><path d="M-5108.8 51.2 L-49968362.4 3828720.5"/><path d="M-4780.6 31.5 L-48986183.0 3814844.1"/><path d="M-4484.2 13.8 L-48004003.7 3800967.8"/><path d="M-4215.0 -2.3 L-47021824.4 3787091.5"/><path d="M-3969.4 -17.0 L-46039645.0 3773215.1"/><path d="M-3744.6 -30.4 L-45057465.7 3759338.8"/><path d="M-3538.0 -42.8 L-44075286.4 3745462.5"/><path d="M-3347.4 -54.2 L-43093107.1 3731586.1"/><path d="M-3171.1 -64.7 L-42110927.7 3717709.8"/><path d="M-3007.5 -74.5 L-41128748.4 3703833.5"/><path d="M-2855.3 -83.6 L-40146569.1 3689957.1"/><path d="M-2713.3 -92.1 L-39164389.8 3676080.8"/><path d="M-2580.6 -100.1 L-38182210.4 3662204.4"/><path d="M-2456.2 -107.5 L-37200031.1 3648328.1"/><path d="M-2339.4 -114.5 L-36217851.8 3634451.8"/><path d="M-2229.6 -121.0 L-35235672.4 3620575.4"/><path d="M-2126.1 -127.2 L-34253493.1 3606699.1"/><path d="M-2028.3 -133.1 L-33271313.8 3592822.8"/><path d="M-1935.9 -138.6 L-32289134.5 3578946.4"/><path d="M-1848.4 -143.8 L-31306955.1 3565070.1"/><path d="M-1765.4 -148.8 L-30324775.8 3551193.8"/><path d="M-1686.6 -153.5 L-29342596.5 3537317.4"/><path d="M-1611.7 -158.0 L-28360417.2 3523441.1"/><path d="M-1540.3 -162.3 L-27378237.8 3509564.8"/><path d="M-1472.3 -166.3 L-26396058.5 3495688.4"/><path d="M-1407.4 -170.2 L-25413879.2 3481812.1"/><path d="M-1345.4 -173.9 L-24431699.8 3467935.8"/><path d="M-1286.2 -177.5 L-23449520.5 3454059.4"/><path d="M-1229.4 -180.9 L-22467341.2 3440183.1"/><path d="M-1175.0 -184.1 L-21485161.9 3426306.8"/><path d="M-1122.9 -187.2 L-20502982.5 3412430.4"/><path d="M-1072.9 -190.2 L-19520803.2 3398554.1"/><path d="M-1024.8 -193.1 L-18538623.9 3384677.8"/><path d="M-978.6 -195.9 L-17556444.6 3370801.4"/><path d="M-934.1 -198.5 L-16574265.2 3356925.1"/><path d="M-891.3 -201.1 L-15592085.9 3343048.8"/><path d="M-850.1 -203.6 L-14609906.6 3329172.4"/><path d="M-810.3 -205.9 L-13627727.2 3315296.1"/><path d="M-772.0 -208.2 L-12645547.9 3301419.8"/><path d="M-734.9 -210.4 L-11663368.6 3287543.4"/><path d="M-699.2 -212.6 L-10681189.3 3273667.1"/><path d="M-664.6 -214.6 L-9699009.9 3259790.8"/><path d="M-631.2 -216.6 L-8716830.6 3245914.4"/><path d="M-598.8 -218.6 L-7734651.3 3232038.1"/><path d="M-567.5 -220.5 L-6752472.0 3218161.7"/><path d="M-537.2 -222.3 L-5770292.6 3204285.4"/><path d="M-507.8 -224.0 L-4788113.3 3190409.1"/><path d="M-479.3 -225.7 L-3805934.0 3176532.7"/><path d="M-451.6 -227.4 L-2823754.6 3162656.4"/><path d="M-424.8 -229.0 L-1841575.3 3148780.1"/><path d="M-398.7 -230.6 L-859396.0 3134903.7"/><path d="M-373.4 -232.1 L122783.3 3121027.4"/><path d="M-348.8 -233.5 L1104962.7 3107151.1"/><path d="M-324.9 -235.0 L2087142.0 3093274.7"/><path d="M-301.7 -236.4 L3069321.3 3079398.4"/><path d="M-257.1 -239.0 L5033680.0 3051645.7"/><path d="M-235.6 -240.3 L6015859.3 3037769.4"/><path d="M-214.8 -241.6 L6998038.6 3023893.1"/><path d="M-194.4 -242.8 L7980218.0 3010016.7"/><path d="M-174.6 -244.0 L8962397.3 2996140.4"/><path d="M-155.3 -245.1 L9944576.6 2982264.1"/><path d="M-136.5 -246.2 L10926755.9 2968387.7"/><path d="M-118.1 -247.3 L11908935.3 2954511.4"/><path d="M-100.1 -248.4 L12891114.6 2940635.1"/><path d="M-82.6 -249.5 L13873293.9 2926758.7"/><path d="M-65.5 -250.5 L14855473.2 2912882.4"/><path d="M-48.8 -251.5 L15837652.6 2899006.1"/><path d="M-32.5 -252.5 L16819831.9 2885129.7"/><path d="M-16.6 -253.4 L17802011.2 2871253.4"/><path d="M-1.0 -254.3 L18784190.6 2857377.1"/><path d="M14.2 -255.2 L19766369.9 2843500.7"/><path d="M29.1 -256.1 L20748549.2 2829624.4"/><path d="M43.7 -257.0 L21730728.5 2815748.1"/><path d="M57.9 -257.9 L22712907.9 2801871.7"/><path d="M71.9 -258.7 L23695087.2 2787995.4"/><path d="M85.6 -259.5 L24677266.5 2774119.0"/><path d="M98.9 -260.3 L25659445.8 2760242.7"/><path d="M112.0 -261.1 L26641625.2 2746366.4"/><path d="M124.8 -261.9 L27623804.5 2732490.0"/><path d="M137.4 -262.6 L28605983.8 2718613.7"/><path d="M149.7 -263.4 L29588163.2 2704737.4"/><path d="M161.8 -264.1 L30570342.5 2690861.0"/><path d="M173.6 -264.8 L31552521.8 2676984.7"/><path d="M185.2 -265.5 L32534701.1 2663108.4"/><path d="M196.6 -266.2 L33516880.5 2649232.0"/><path d="M207.8 -266.8 L34499059.8 2635355.7"/><path d="M218.7 -267.5 L35481239.1 2621479.4"/><path d="M229.5 -268.1 L36463418.4 2607603.0"/><path d="M240.0 -268.8 L37445597.8 2593726.7"/><path d="M250.4 -269.4 L38427777.1 2579850.4"/><path d="M260.6 -270.0 L39409956.4 2565974.0"/><path d="M270.5 -270.6 L40392135.8 2552097.7"/><path d="M280.3 -271.2 L41374315.1 2538221.4"/><path d="M290.0 -271.7 L42356494.4 2524345.0"/><path d="M299.4 -272.3 L43338673.7 2510468.7"/><path d="M308.7 -272.9 L44320853.1 2496592.4"/><path d="M317.8 -273.4 L45303032.4 2482716.0"/><path d="M326.8 -273.9 L46285211.7 2468839.7"/><path d="M335.7 -274.5 L47267391.0 2454963.4"/><path d="M344.3 -275.0 L48249570.4 2441087.0"/><path d="M352.9 -275.5 L49231749.7 2427210.7"/><path d="M361.2 -276.0 L50213929.0 2413334.4"/><path d="M369.5 -276.5 L51196108.3 2399458.0"/><path d="M377.6 -277.0 L52178287.7 2385581.7"/><path d="M385.6 -277.5 L53160467.0 2371705.4"/><path d="M393.5 -277.9 L54142646.3 2357829.0"/><path d="M401.2 -278.4 L55124825.7 2343952.7"/><path d="M408.8 -278.8 L56107005.0 2330076.3"/><path d="M416.3 -279.3 L57089184.3 2316200.0"/><path d="M423.7 -279.7 L58071363.6 2302323.7"/><path d="M430.9 -280.2 L12719805.3 492685.9"/><path d="M438.1 -280.6 L105252.1 3691.0"/><path d="M445.1 -281.0 L53521.9 1685.7"/><path d="M452.1 -281.4 L36184.1 1013.6"/><path d="M458.9 -281.8 L27497.4 676.9"/></g>
<path d="M-279.1 -237.7 L4051500.6 3065522.1" stroke="#c8566a" stroke-width="1.5"/>
<path d="M-4658234.8 3188574.1 L1245.7 -253.9" stroke="#86b43c" stroke-width="1.5"/>
</g>
<clipPath id="belowR"><path d="M425.59 493.29 L639.54 304.55 L610.48 390.07 L428.74 564.80 Z"/></clipPath>
<g clip-path="url(#belowR)"><g stroke="#ffffff" stroke-width="1.2" opacity="0.13" fill="none"><path d="M-7466.4 192.2 L458.9 -281.8"/><path d="M-8072.3 235.2 L465.7 -281.6"/><path d="M-8791.4 286.3 L472.6 -281.4"/><path d="M-9658.8 347.9 L479.7 -281.1"/><path d="M-10725.5 423.7 L486.8 -280.9"/><path d="M-12069.2 519.1 L494.1 -280.6"/><path d="M-13814.0 643.1 L501.5 -280.3"/><path d="M-16170.7 810.5 L509.0 -280.1"/><path d="M-19529.9 1049.1 L516.7 -279.8"/><path d="M-24704.1 1416.7 L524.4 -279.5"/><path d="M-33708.5 2056.3 L532.4 -279.2"/><path d="M-53295.6 3447.7 L540.4 -279.0"/><path d="M-128708.3 8804.8 L548.6 -278.7"/><path d="M-54560822.7 3893603.2 L557.0 -278.4"/><path d="M-53499065.6 3878602.6 L565.5 -278.1"/><path d="M-52437308.4 3863602.0 L574.2 -277.8"/><path d="M-51375551.2 3848601.4 L583.0 -277.4"/><path d="M-50313794.0 3833600.8 L592.0 -277.1"/><path d="M-49252036.8 3818600.1 L601.2 -276.8"/><path d="M-48190279.6 3803599.5 L610.5 -276.5"/><path d="M-47128522.4 3788598.9 L620.0 -276.1"/><path d="M-46066765.2 3773598.3 L629.7 -275.8"/><path d="M-45005008.0 3758597.7 L639.6 -275.4"/><path d="M-43943250.8 3743597.0 L649.7 -275.1"/><path d="M-42881493.6 3728596.4 L660.0 -274.7"/><path d="M-41819736.5 3713595.8 L670.5 -274.3"/><path d="M-40757979.3 3698595.2 L681.2 -274.0"/><path d="M-39696222.1 3683594.6 L692.1 -273.6"/><path d="M-38634464.9 3668593.9 L703.3 -273.2"/><path d="M-37572707.7 3653593.3 L714.7 -272.8"/><path d="M-36510950.5 3638592.7 L726.4 -272.4"/><path d="M-35449193.3 3623592.1 L738.3 -271.9"/><path d="M-34387436.1 3608591.5 L750.4 -271.5"/><path d="M-33325678.9 3593590.9 L762.8 -271.1"/><path d="M-32263921.7 3578590.2 L775.5 -270.6"/><path d="M-31202164.6 3563589.6 L788.5 -270.2"/><path d="M-30140407.4 3548589.0 L801.8 -269.7"/><path d="M-29078650.2 3533588.4 L815.4 -269.2"/><path d="M-28016893.0 3518587.8 L829.3 -268.7"/><path d="M-26955135.8 3503587.1 L843.5 -268.2"/><path d="M-25893378.6 3488586.5 L858.1 -267.7"/><path d="M-24831621.4 3473585.9 L873.0 -267.2"/><path d="M-23769864.2 3458585.3 L888.3 -266.6"/><path d="M-22708107.0 3443584.7 L904.0 -266.1"/><path d="M-21646349.8 3428584.0 L920.1 -265.5"/><path d="M-20584592.7 3413583.4 L936.5 -264.9"/><path d="M-19522835.5 3398582.8 L953.4 -264.3"/><path d="M-18461078.3 3383582.2 L970.8 -263.7"/><path d="M-17399321.1 3368581.6 L988.6 -263.1"/><path d="M-16337563.9 3353581.0 L1006.9 -262.4"/><path d="M-15275806.7 3338580.3 L1025.6 -261.8"/><path d="M-14214049.5 3323579.7 L1044.9 -261.1"/><path d="M-13152292.3 3308579.1 L1064.7 -260.4"/><path d="M-12090535.1 3293578.5 L1085.1 -259.6"/><path d="M-11028777.9 3278577.9 L1106.1 -258.9"/><path d="M-9967020.8 3263577.2 L1127.7 -258.1"/><path d="M-8905263.6 3248576.6 L1149.9 -257.3"/><path d="M-7843506.4 3233576.0 L1172.8 -256.5"/><path d="M-6781749.2 3218575.4 L1196.3 -255.7"/><path d="M-5719992.0 3203574.8 L1220.6 -254.8"/><path d="M-3596477.6 3173573.5 L1271.6 -253.0"/><path d="M-2534720.4 3158572.9 L1298.3 -252.1"/><path d="M-1472963.2 3143572.3 L1325.9 -251.1"/><path d="M-411206.0 3128571.7 L1354.4 -250.1"/><path d="M650551.1 3113571.0 L1383.9 -249.0"/><path d="M1712308.3 3098570.4 L1414.4 -248.0"/><path d="M2774065.5 3083569.8 L1446.0 -246.8"/><path d="M3835822.7 3068569.2 L1478.7 -245.7"/><path d="M4897579.9 3053568.6 L1512.6 -244.5"/><path d="M5959337.1 3038568.0 L1547.8 -243.2"/><path d="M7021094.3 3023567.3 L1584.3 -241.9"/><path d="M8082851.5 3008566.7 L1622.2 -240.6"/><path d="M9144608.7 2993566.1 L1661.6 -239.2"/><path d="M10206365.9 2978565.5 L1702.6 -237.7"/><path d="M11268123.0 2963564.9 L1745.3 -236.2"/><path d="M12329880.2 2948564.2 L1789.8 -234.7"/><path d="M13391637.4 2933563.6 L1836.2 -233.0"/><path d="M14453394.6 2918563.0 L1884.6 -231.3"/><path d="M15515151.8 2903562.4 L1935.2 -229.5"/><path d="M16576909.0 2888561.8 L1988.0 -227.6"/><path d="M17638666.2 2873561.1 L2043.4 -225.7"/><path d="M18700423.4 2858560.5 L2101.4 -223.6"/><path d="M19762180.6 2843559.9 L2162.3 -221.4"/><path d="M20823937.8 2828559.3 L2226.2 -219.2"/><path d="M21885694.9 2813558.7 L2293.5 -216.8"/><path d="M22947452.1 2798558.1 L2364.3 -214.3"/><path d="M24009209.3 2783557.4 L2439.0 -211.6"/><path d="M25070966.5 2768556.8 L2517.8 -208.8"/><path d="M26132723.7 2753556.2 L2601.2 -205.9"/><path d="M27194480.9 2738555.6 L2689.5 -202.8"/><path d="M28256238.1 2723555.0 L2783.3 -199.4"/><path d="M29317995.3 2708554.3 L2882.9 -195.9"/><path d="M30379752.5 2693553.7 L2989.1 -192.1"/><path d="M31441509.7 2678553.1 L3102.4 -188.1"/><path d="M32503266.8 2663552.5 L3223.6 -183.8"/><path d="M33565024.0 2648551.9 L3353.5 -179.2"/><path d="M34626781.2 2633551.2 L3493.2 -174.3"/><path d="M35688538.4 2618550.6 L3643.7 -168.9"/><path d="M36750295.6 2603550.0 L3806.4 -163.1"/><path d="M37812052.8 2588549.4 L3982.8 -156.9"/><path d="M38873810.0 2573548.8 L4174.8 -150.1"/><path d="M39935567.2 2558548.1 L4384.5 -142.7"/><path d="M40997324.4 2543547.5 L4614.4 -134.5"/><path d="M42059081.6 2528546.9 L4867.6 -125.5"/><path d="M43120838.7 2513546.3 L5148.0 -115.6"/><path d="M44182595.9 2498545.7 L5459.9 -104.5"/><path d="M45244353.1 2483545.1 L5809.3 -92.1"/><path d="M46306110.3 2468544.4 L6203.1 -78.2"/><path d="M47367867.5 2453543.8 L6650.4 -62.3"/><path d="M48429624.7 2438543.2 L7163.1 -44.1"/><path d="M49491381.9 2423542.6 L7756.4 -23.1"/><path d="M50553139.1 2408542.0 L8451.0 1.5"/><path d="M51614896.3 2393541.3 L9275.4 30.8"/><path d="M52676653.5 2378540.7 L10269.7 66.0"/><path d="M53738410.6 2363540.1 L11492.3 109.4"/><path d="M54800167.8 2348539.5 L13032.1 164.0"/><path d="M55861925.0 2333538.9 L15031.1 234.9"/><path d="M56923682.2 2318538.2 L17730.5 330.6"/><path d="M57985439.4 2303537.6 L21576.6 467.0"/><path d="M59047196.6 2288537.0 L27497.4 676.9"/><path d="M-7466.4 192.2 L-54879259.0 3898102.1"/><path d="M-6866.9 156.3 L-53897079.7 3884225.8"/><path d="M-6343.5 125.0 L-52914900.3 3870349.5"/><path d="M-5882.7 97.5 L-51932721.0 3856473.1"/><path d="M-5473.9 73.0 L-50950541.7 3842596.8"/><path d="M-5108.8 51.2 L-49968362.4 3828720.5"/><path d="M-4780.6 31.5 L-48986183.0 3814844.1"/><path d="M-4484.2 13.8 L-48004003.7 3800967.8"/><path d="M-4215.0 -2.3 L-47021824.4 3787091.5"/><path d="M-3969.4 -17.0 L-46039645.0 3773215.1"/><path d="M-3744.6 -30.4 L-45057465.7 3759338.8"/><path d="M-3538.0 -42.8 L-44075286.4 3745462.5"/><path d="M-3347.4 -54.2 L-43093107.1 3731586.1"/><path d="M-3171.1 -64.7 L-42110927.7 3717709.8"/><path d="M-3007.5 -74.5 L-41128748.4 3703833.5"/><path d="M-2855.3 -83.6 L-40146569.1 3689957.1"/><path d="M-2713.3 -92.1 L-39164389.8 3676080.8"/><path d="M-2580.6 -100.1 L-38182210.4 3662204.4"/><path d="M-2456.2 -107.5 L-37200031.1 3648328.1"/><path d="M-2339.4 -114.5 L-36217851.8 3634451.8"/><path d="M-2229.6 -121.0 L-35235672.4 3620575.4"/><path d="M-2126.1 -127.2 L-34253493.1 3606699.1"/><path d="M-2028.3 -133.1 L-33271313.8 3592822.8"/><path d="M-1935.9 -138.6 L-32289134.5 3578946.4"/><path d="M-1848.4 -143.8 L-31306955.1 3565070.1"/><path d="M-1765.4 -148.8 L-30324775.8 3551193.8"/><path d="M-1686.6 -153.5 L-29342596.5 3537317.4"/><path d="M-1611.7 -158.0 L-28360417.2 3523441.1"/><path d="M-1540.3 -162.3 L-27378237.8 3509564.8"/><path d="M-1472.3 -166.3 L-26396058.5 3495688.4"/><path d="M-1407.4 -170.2 L-25413879.2 3481812.1"/><path d="M-1345.4 -173.9 L-24431699.8 3467935.8"/><path d="M-1286.2 -177.5 L-23449520.5 3454059.4"/><path d="M-1229.4 -180.9 L-22467341.2 3440183.1"/><path d="M-1175.0 -184.1 L-21485161.9 3426306.8"/><path d="M-1122.9 -187.2 L-20502982.5 3412430.4"/><path d="M-1072.9 -190.2 L-19520803.2 3398554.1"/><path d="M-1024.8 -193.1 L-18538623.9 3384677.8"/><path d="M-978.6 -195.9 L-17556444.6 3370801.4"/><path d="M-934.1 -198.5 L-16574265.2 3356925.1"/><path d="M-891.3 -201.1 L-15592085.9 3343048.8"/><path d="M-850.1 -203.6 L-14609906.6 3329172.4"/><path d="M-810.3 -205.9 L-13627727.2 3315296.1"/><path d="M-772.0 -208.2 L-12645547.9 3301419.8"/><path d="M-734.9 -210.4 L-11663368.6 3287543.4"/><path d="M-699.2 -212.6 L-10681189.3 3273667.1"/><path d="M-664.6 -214.6 L-9699009.9 3259790.8"/><path d="M-631.2 -216.6 L-8716830.6 3245914.4"/><path d="M-598.8 -218.6 L-7734651.3 3232038.1"/><path d="M-567.5 -220.5 L-6752472.0 3218161.7"/><path d="M-537.2 -222.3 L-5770292.6 3204285.4"/><path d="M-507.8 -224.0 L-4788113.3 3190409.1"/><path d="M-479.3 -225.7 L-3805934.0 3176532.7"/><path d="M-451.6 -227.4 L-2823754.6 3162656.4"/><path d="M-424.8 -229.0 L-1841575.3 3148780.1"/><path d="M-398.7 -230.6 L-859396.0 3134903.7"/><path d="M-373.4 -232.1 L122783.3 3121027.4"/><path d="M-348.8 -233.5 L1104962.7 3107151.1"/><path d="M-324.9 -235.0 L2087142.0 3093274.7"/><path d="M-301.7 -236.4 L3069321.3 3079398.4"/><path d="M-257.1 -239.0 L5033680.0 3051645.7"/><path d="M-235.6 -240.3 L6015859.3 3037769.4"/><path d="M-214.8 -241.6 L6998038.6 3023893.1"/><path d="M-194.4 -242.8 L7980218.0 3010016.7"/><path d="M-174.6 -244.0 L8962397.3 2996140.4"/><path d="M-155.3 -245.1 L9944576.6 2982264.1"/><path d="M-136.5 -246.2 L10926755.9 2968387.7"/><path d="M-118.1 -247.3 L11908935.3 2954511.4"/><path d="M-100.1 -248.4 L12891114.6 2940635.1"/><path d="M-82.6 -249.5 L13873293.9 2926758.7"/><path d="M-65.5 -250.5 L14855473.2 2912882.4"/><path d="M-48.8 -251.5 L15837652.6 2899006.1"/><path d="M-32.5 -252.5 L16819831.9 2885129.7"/><path d="M-16.6 -253.4 L17802011.2 2871253.4"/><path d="M-1.0 -254.3 L18784190.6 2857377.1"/><path d="M14.2 -255.2 L19766369.9 2843500.7"/><path d="M29.1 -256.1 L20748549.2 2829624.4"/><path d="M43.7 -257.0 L21730728.5 2815748.1"/><path d="M57.9 -257.9 L22712907.9 2801871.7"/><path d="M71.9 -258.7 L23695087.2 2787995.4"/><path d="M85.6 -259.5 L24677266.5 2774119.0"/><path d="M98.9 -260.3 L25659445.8 2760242.7"/><path d="M112.0 -261.1 L26641625.2 2746366.4"/><path d="M124.8 -261.9 L27623804.5 2732490.0"/><path d="M137.4 -262.6 L28605983.8 2718613.7"/><path d="M149.7 -263.4 L29588163.2 2704737.4"/><path d="M161.8 -264.1 L30570342.5 2690861.0"/><path d="M173.6 -264.8 L31552521.8 2676984.7"/><path d="M185.2 -265.5 L32534701.1 2663108.4"/><path d="M196.6 -266.2 L33516880.5 2649232.0"/><path d="M207.8 -266.8 L34499059.8 2635355.7"/><path d="M218.7 -267.5 L35481239.1 2621479.4"/><path d="M229.5 -268.1 L36463418.4 2607603.0"/><path d="M240.0 -268.8 L37445597.8 2593726.7"/><path d="M250.4 -269.4 L38427777.1 2579850.4"/><path d="M260.6 -270.0 L39409956.4 2565974.0"/><path d="M270.5 -270.6 L40392135.8 2552097.7"/><path d="M280.3 -271.2 L41374315.1 2538221.4"/><path d="M290.0 -271.7 L42356494.4 2524345.0"/><path d="M299.4 -272.3 L43338673.7 2510468.7"/><path d="M308.7 -272.9 L44320853.1 2496592.4"/><path d="M317.8 -273.4 L45303032.4 2482716.0"/><path d="M326.8 -273.9 L46285211.7 2468839.7"/><path d="M335.7 -274.5 L47267391.0 2454963.4"/><path d="M344.3 -275.0 L48249570.4 2441087.0"/><path d="M352.9 -275.5 L49231749.7 2427210.7"/><path d="M361.2 -276.0 L50213929.0 2413334.4"/><path d="M369.5 -276.5 L51196108.3 2399458.0"/><path d="M377.6 -277.0 L52178287.7 2385581.7"/><path d="M385.6 -277.5 L53160467.0 2371705.4"/><path d="M393.5 -277.9 L54142646.3 2357829.0"/><path d="M401.2 -278.4 L55124825.7 2343952.7"/><path d="M408.8 -278.8 L56107005.0 2330076.3"/><path d="M416.3 -279.3 L57089184.3 2316200.0"/><path d="M423.7 -279.7 L58071363.6 2302323.7"/><path d="M430.9 -280.2 L12719805.3 492685.9"/><path d="M438.1 -280.6 L105252.1 3691.0"/><path d="M445.1 -281.0 L53521.9 1685.7"/><path d="M452.1 -281.4 L36184.1 1013.6"/><path d="M458.9 -281.8 L27497.4 676.9"/></g>
<path d="M-279.1 -237.7 L4051500.6 3065522.1" stroke="#c8566a" stroke-width="1.5"/>
<path d="M-4658234.8 3188574.1 L1245.7 -253.9" stroke="#86b43c" stroke-width="1.5"/>
</g>
<path d="M188.56 179.00 L420.61 380.40" stroke="#d6d6d6" stroke-width="1" stroke-linecap="round"/>
<path d="M680.78 183.16 L420.61 380.40" stroke="#d6d6d6" stroke-width="1" stroke-linecap="round"/>
<path d="M420.61 380.40 L428.74 564.80" stroke="#cfcfcf" stroke-width="1" stroke-linecap="round"/>
<path d="M438.30 69.72 L680.78 183.16 L610.48 390.07 L428.74 564.80 L262.51 383.92 L188.56 179.00 Z" fill="none" stroke="#f39d2c" stroke-width="2" stroke-linejoin="round"/>
<g transform="translate(433.8 301.8)"><ellipse rx="9.8" ry="9.8" fill="none" stroke="#ffffff" stroke-width="1.4" stroke-dasharray="3 3"/><ellipse rx="9.8" ry="9.8" fill="none" stroke="#e52a2a" stroke-width="1.4" stroke-dasharray="3 3" stroke-dashoffset="3"/><path d="M-14 -10.5 L14.2 10.6 M-14.8 10.3 L14.7 -9.8 M0 -14.2 V13.9" stroke="#1a1a1a" stroke-width="1.3"/><circle r="2.9" fill="#f3a02c" stroke="#111" stroke-width="1.2"/></g>
<path d="M507.5 335.5 L507.5 361.5 L513.5 355.8 L518 364.5 L521.5 363 L517.3 354.6 L525.3 354.3 Z" fill="#ffffff" stroke="#111" stroke-width="1"/>
<rect x="9.90" y="63.20" width="30.10" height="17.90" rx="4.00" fill="#2b2b2b" />
<path d="M31.0 71.0 l3 3 l3 -3" stroke="#cfcfcf" stroke-width="1.2" fill="none"/>
<g stroke="#dddddd" stroke-width="1.1" fill="none"><path d="M15 74.5 h13 M15 78 h13 M18 70 l-2 10 M24 70 l-2 10"/></g><circle cx="25" cy="68" r="3.2" fill="#dddddd"/>
<rect x="48.50" y="63.20" width="107.50" height="17.90" rx="4.00" fill="#2b2b2b" />
<path d="M147.2 71.0 l3 3 l3 -3" stroke="#cfcfcf" stroke-width="1.2" fill="none"/>
<g stroke="#d8d8d8" stroke-width="1" fill="none"><path d="M52.5 68 v-2.5 h2.5 M63 65.5 h2.5 v2.5 M65.5 76 v2.5 h-2.5 M55 78.5 h-2.5 v-2.5"/></g><rect x="55" y="68.3" width="8.5" height="8" fill="#dddddd"/>
<text x="73.30" y="76.30" font-size="11.70" fill="#dddddd" stroke="#dddddd" stroke-width="0.1" textLength="62.70" lengthAdjust="spacingAndGlyphs">Object Mode</text>
<rect x="162.90" y="63.20" width="38.10" height="17.90" rx="4.00" fill="#2b2b2b" />
<text x="169.00" y="76.30" font-size="11.70" fill="#dddddd" stroke="#dddddd" stroke-width="0.1" textLength="24.37" lengthAdjust="spacingAndGlyphs">View</text>
<rect x="202.90" y="63.20" width="44.10" height="17.90" rx="4.00" fill="#2b2b2b" />
<text x="209.40" y="76.30" font-size="11.70" fill="#dddddd" stroke="#dddddd" stroke-width="0.1" textLength="30.59" lengthAdjust="spacingAndGlyphs">Select</text>
<rect x="249.30" y="63.20" width="31.60" height="17.90" rx="4.00" fill="#2b2b2b" />
<text x="255.00" y="76.30" font-size="11.70" fill="#dddddd" stroke="#dddddd" stroke-width="0.1" textLength="19.59" lengthAdjust="spacingAndGlyphs">Add</text>
<rect x="282.80" y="63.20" width="46.10" height="17.90" rx="4.00" fill="#2b2b2b" />
<text x="289.30" y="76.30" font-size="11.70" fill="#dddddd" stroke="#dddddd" stroke-width="0.1" textLength="32.90" lengthAdjust="spacingAndGlyphs">Object</text>
<rect x="347.10" y="63.20" width="77.80" height="17.90" rx="4.00" fill="#2b2b2b" />
<path d="M415.5 71.0 l3 3 l3 -3" stroke="#cfcfcf" stroke-width="1.2" fill="none"/>
<text x="372.10" y="76.30" font-size="11.70" fill="#dddddd" stroke="#dddddd" stroke-width="0.1" textLength="31.61" lengthAdjust="spacingAndGlyphs">Global</text>
<g stroke="#dddddd" stroke-width="1.1" fill="none"><path d="M355.5 79 V67 M353 69 l2.5 -3 l2.5 3 M355.5 79 H366 M364 76.5 l2.5 2.5 l-2.5 2.5 M355.5 79 l-4 3"/></g>
<rect x="431.60" y="63.20" width="50.40" height="17.90" rx="4.00" fill="#2b2b2b" />
<rect x="431.60" y="63.20" width="19.00" height="17.90" rx="4.00" fill="#555555" />
<rect x="446.00" y="63.20" width="4.60" height="17.90" rx="0.00" fill="#555555" />
<path d="M473.4 71.0 l3 3 l3 -3" stroke="#cfcfcf" stroke-width="1.2" fill="none"/>
<g transform="rotate(45 442.6 71.2)" fill="none" stroke="#d0d0d0" stroke-width="1"><path d="M437.4 76.2 V71.2 A5.2 5.2 0 0 1 447.8 71.2 V76.2 H444.9 V71.2 A2.3 2.3 0 0 0 440.3 71.2 V76.2 Z M437.4 73.7 H440.3 M444.9 73.7 H447.8"/></g>
<g stroke="#d8d8d8" stroke-width="0.9" fill="none"><path d="M461.5 68.5 H455.5 V76.5 H461.5 M457.5 76.5 V73 M459.5 76.5 V74 M461.5 76.5 V73 M467 68.5 H468.5 V76.5 H467"/></g><rect x="463" y="65" width="3" height="13.9" fill="#eeeeee"/>
<rect x="489.40" y="63.20" width="49.20" height="17.90" rx="4.00" fill="#2b2b2b" />
<rect x="489.40" y="63.20" width="17.80" height="17.90" rx="4.00" fill="#4a4a4a" />
<rect x="503.00" y="63.20" width="4.20" height="17.90" rx="0.00" fill="#4a4a4a" />
<path d="M530.5 71.0 l3 3 l3 -3" stroke="#8a8a8a" stroke-width="1.2" fill="none"/>
<circle cx="498.3" cy="72.2" r="5.5" fill="none" stroke="#8a8a8a" stroke-width="1"/><circle cx="498.3" cy="72.2" r="2" fill="#aaaaaa"/>
<path d="M511 79 C515 79 515.5 65 518 65 C520.5 65 521 79 525 79" stroke="#8a8a8a" stroke-width="1.1" fill="none"/>
<rect x="546.00" y="63.20" width="29.50" height="17.90" rx="4.00" fill="#2b2b2b" />
<path d="M567.3 71.0 l3 3 l3 -3" stroke="#cfcfcf" stroke-width="1.2" fill="none"/>
<g stroke="#dddddd" stroke-width="1.3" fill="none"><circle cx="555" cy="74" r="3.5"/><circle cx="559" cy="70" r="3.5"/></g><circle cx="555" cy="74" r="1.4" fill="#dddddd"/>
<rect x="594.80" y="63.20" width="28.50" height="17.90" rx="4.00" fill="#2b2b2b" />
<path d="M615.0 71.0 l3 3 l3 -3" stroke="#cfcfcf" stroke-width="1.2" fill="none"/>
<g stroke="#dddddd" stroke-width="1.1" fill="none"><rect x="599.5" y="66.5" width="11" height="3"/><path d="M600.5 69.5 v9 h9 v-9 M603 72.5 h4"/></g>
<rect x="631.30" y="63.20" width="29.30" height="17.90" rx="4.00" fill="#2b2b2b" />
<path d="M651.7 71.0 l3 3 l3 -3" stroke="#cfcfcf" stroke-width="1.2" fill="none"/>
<path d="M637 69 l3 10 l1.5 -4 l4 -1.5 z" fill="#dddddd"/><path d="M640 68 q5 -6 10 0 q-5 6 -10 0 z" fill="none" stroke="#dddddd" stroke-width="1.1"/><circle cx="645" cy="68" r="1.6" fill="#dddddd"/>
<rect x="668.00" y="63.20" width="86.60" height="17.90" rx="4.00" fill="#2b2b2b" />
<rect x="668.00" y="63.20" width="18.40" height="17.90" rx="4.00" fill="#5680c2" />
<rect x="682.00" y="63.20" width="4.40" height="17.90" rx="0.00" fill="#5680c2" />
<path d="M746.3 71.0 l3 3 l3 -3" stroke="#cfcfcf" stroke-width="1.2" fill="none"/>
<circle cx="679.5" cy="70" r="4.8" fill="#e8e8e8"/><path d="M677.5 70.5 a3 3 0 0 0 4 -1" stroke="#5680c2" stroke-width="1" fill="none"/><path d="M674.2 70.5 a5 5 0 1 0 7.5 5.2" fill="none" stroke="#ffffff" stroke-width="1.4"/>
<text x="694.40" y="76.30" font-size="11.70" fill="#dddddd" stroke="#dddddd" stroke-width="0.1" textLength="43.70" lengthAdjust="spacingAndGlyphs">Overlays</text>
<rect x="762.60" y="63.20" width="17.40" height="17.90" rx="4.00" fill="#4a4a4a" />
<g stroke="#dddddd" stroke-width="1" fill="none"><path d="M767 67.5 h8.5 M767 77 h8.5 M766 68.5 v7.5 M776.5 68.5 v7.5"/></g><rect x="764.8" y="66.0" width="3" height="3" fill="#4a4a4a" stroke="#dddddd" stroke-width="0.9"/><rect x="775.0" y="66.0" width="3" height="3" fill="#4a4a4a" stroke="#dddddd" stroke-width="0.9"/><rect x="764.8" y="75.5" width="3" height="3" fill="#4a4a4a" stroke="#dddddd" stroke-width="0.9"/><rect x="775.0" y="75.5" width="3" height="3" fill="#4a4a4a" stroke="#dddddd" stroke-width="0.9"/><rect x="769.3" y="70.3" width="4" height="4" fill="none" stroke="#dddddd" stroke-width="0.8"/>
<rect x="787.10" y="63.20" width="74.60" height="17.90" rx="4.00" fill="#4a4a4a" />
<rect x="805.80" y="63.20" width="18.10" height="17.90" rx="0.00" fill="#5680c2" />
<rect x="805.30" y="63.20" width="0.80" height="17.90" rx="0.00" fill="#3a3a3a" />
<rect x="824.30" y="63.20" width="0.80" height="17.90" rx="0.00" fill="#3a3a3a" />
<rect x="842.90" y="63.20" width="0.80" height="17.90" rx="0.00" fill="#3a3a3a" />
<g fill="none" stroke="#dddddd" stroke-width="1"><circle cx="796.4" cy="72.2" r="6"/><ellipse cx="796.4" cy="72.2" rx="2.8" ry="6"/><path d="M790.4 72.2 h12"/></g>
<circle cx="814.8" cy="72.2" r="6.2" fill="#ffffff"/>
<circle cx="833.6" cy="72.2" r="6" fill="#4a4a4a" stroke="#dddddd" stroke-width="1"/><path d="M833.6 66.2 a6 6 0 0 0 0 12 z" fill="#d0d0d0"/><path d="M833.6 72.2 h6 a6 6 0 0 0 -6 6z" fill="#9a9a9a"/>
<circle cx="852.3" cy="72.2" r="6" fill="none" stroke="#dddddd" stroke-width="1"/><path d="M848.5 70 a4 4 0 0 1 3 -3" stroke="#dddddd" stroke-width="1.5" fill="none"/>
<g opacity="0.6">
<text x="76.20" y="106.10" font-size="11.70" fill="#000000" stroke="#000000" stroke-width="0.1" textLength="83.19" lengthAdjust="spacingAndGlyphs">User Perspective</text>
<text x="76.20" y="126.10" font-size="11.70" fill="#000000" stroke="#000000" stroke-width="0.1" textLength="102.00" lengthAdjust="spacingAndGlyphs">(1) Collection | Cube</text>
</g>
<text x="75.20" y="105.10" font-size="11.70" fill="#e8e8e8" stroke="#e8e8e8" stroke-width="0.1" textLength="83.19" lengthAdjust="spacingAndGlyphs">User Perspective</text>
<text x="75.20" y="125.10" font-size="11.70" fill="#e8e8e8" stroke="#e8e8e8" stroke-width="0.1" textLength="102.00" lengthAdjust="spacingAndGlyphs">(1) Collection | Cube</text>
<rect x="9.20" y="94.00" width="37.80" height="67.50" rx="4.00" fill="#2b2b2b" />
<rect x="9.20" y="94.00" width="37.80" height="33.00" rx="4.00" fill="#5680c2" />
<rect x="9.20" y="120.00" width="37.80" height="7.00" rx="0.00" fill="#5680c2" />
<rect x="9.20" y="168.60" width="37.80" height="138.40" rx="4.00" fill="#2b2b2b" />
<rect x="9.20" y="202.30" width="37.80" height="0.80" rx="0.00" fill="#242424" />
<rect x="9.20" y="236.80" width="37.80" height="0.80" rx="0.00" fill="#242424" />
<rect x="9.20" y="272.00" width="37.80" height="0.80" rx="0.00" fill="#242424" />
<rect x="9.20" y="313.60" width="37.80" height="68.60" rx="4.00" fill="#2b2b2b" />
<rect x="9.20" y="347.10" width="37.80" height="0.80" rx="0.00" fill="#242424" />
<rect x="9.20" y="388.80" width="37.80" height="33.80" rx="4.00" fill="#2b2b2b" />
<rect x="18.8" y="101.3" width="18" height="18" fill="none" stroke="#f0a030" stroke-width="1.5" stroke-dasharray="3 2.2"/>
<path d="M25 104.8 L25 115 L27.6 112.7 L32.5 111.5 Z" fill="#e8e8e8"/><path d="M42 124 l3 -3 v3z" fill="#cfd8ea"/>
<circle cx="28" cy="144.3" r="10.2" fill="none" stroke="#ffffff" stroke-width="1.7"/><circle cx="28" cy="144.3" r="10.2" fill="none" stroke="#b03030" stroke-width="1.7" stroke-dasharray="3.5 4.5"/>
<path d="M28 137.5 v4.5 M28 146.5 v4.5 M21.3 144.3 h4.5 M30.2 144.3 h4.5" stroke="#aaaaaa" stroke-width="1.3"/>
<g transform="translate(28 185.5)"><circle r="9.2" fill="none" stroke="#e0e0e0" stroke-width="1" stroke-dasharray="6 3"/><rect x="-4.8" y="-4.8" width="9.6" height="9.6" fill="#e0e0e0"/><path d="M0 -11 l2.5 3.5 h-5z M0 11 l2.5 -3.5 h-5z M-11 0 l3.5 2.5 v-5z M11 0 l-3.5 2.5 v-5z" fill="#e0e0e0"/></g>
<g transform="translate(28 219.5)" fill="#e0e0e0"><path d="M0 -11 l3.5 4 h-7z M0 11 l3.5 -4 h-7z M-11 0 l4 3.5 v-7z M11 0 l-4 3.5 v-7z"/><path d="M0 -6 v3 M0 3 v3 M-6 0 h3 M3 0 h3" stroke="#e0e0e0" stroke-width="1.2"/></g>
<g transform="translate(28 254.5)"><path d="M-8 -2 a8.5 8.5 0 0 1 15 -4 M8 2 a8.5 8.5 0 0 1 -15 4" fill="none" stroke="#e0e0e0" stroke-width="1.1"/><path d="M-3 0 l3 -3 l3 3 l-3 3z" fill="#e0e0e0"/><path d="M-11.5 -1 h7 l-3.5 4z M11.5 1 h-7 l3.5 -4z" fill="#e0e0e0"/></g>
<g transform="translate(28 290)"><rect x="-9" y="-1" width="9.5" height="9.5" fill="#e0e0e0"/><path d="M-7 -4 V-9 H9 V7 H4" fill="none" stroke="#e0e0e0" stroke-width="1.1"/><path d="M1 -1 L7 -7 M3.5 -7 h3.5 v3.5" fill="none" stroke="#e0e0e0" stroke-width="1.2"/></g>
<path d="M42 304 l3 -3 v3z" fill="#aaaaaa"/>
<g transform="translate(28 330)"><path d="M-8 4 l12 -12 l3 3 l-12 12 h-3z" fill="#e0e0e0"/><path d="M-9 9 q5 -6 9 0 q4 5 9 -1" fill="none" stroke="#7fd8b0" stroke-width="1.1"/></g>
<path d="M42 345 l3 -3 v3z" fill="#aaaaaa"/>
<g transform="translate(28 364.5)"><path d="M-8 -10 v19 h17" fill="none" stroke="#e0e0e0" stroke-width="2.2"/><path d="M-6 8 v-11 a11 11 0 0 1 11 11z" fill="#7fd8b0"/><path d="M-6 -3 a11 11 0 0 1 11 11" fill="none" stroke="#e0e0e0" stroke-width="1"/></g>
<g transform="translate(28 406)"><rect x="-9" y="-1" width="9.5" height="9.5" fill="#e0e0e0"/><path d="M-7 -4 V-9 H9 V7 H4" fill="none" stroke="#e0e0e0" stroke-width="1.1"/><path d="M1 -1 L7 -7 M3.5 -7 h3.5 v3.5" fill="none" stroke="#e0e0e0" stroke-width="1.2"/></g>
<circle cx="676.2" cy="108" r="13.5" fill="#262626" opacity="0.6"/>
<circle cx="706.5" cy="108" r="13.5" fill="#262626" opacity="0.6"/>
<circle cx="736.9" cy="108" r="13.5" fill="#262626" opacity="0.6"/>
<circle cx="767.2" cy="108" r="13.5" fill="#262626" opacity="0.6"/>
<g fill="none" stroke="#d8d8d8" stroke-width="1.1"><path d="M670.7 102.1 h10.7 l3 12.5 h-16.7 z M669.7 106.3 h12.7 M668.8 110.5 h14.6 M674.3 102.1 l-1 12.5 M677.8 102.1 l1 12.5"/></g>
<g fill="#d8d8d8"><circle cx="701.6" cy="105" r="3.1"/><circle cx="708.8" cy="104.5" r="3.1"/><rect x="700.4" y="109.5" width="13.7" height="5.8" rx="1"/><path d="M700.5 110.5 l-3.5 -1.5 v7 l3.5 -1.5z"/></g><g fill="#262626"><circle cx="701.6" cy="105" r="1.1"/><circle cx="708.8" cy="104.5" r="1.1"/></g>
<path d="M731.5 111 l-1.5 -3.5 a1 1 0 0 1 1.8 -0.8 l1.7 2.5 v-8.5 a1.1 1.1 0 0 1 2.2 0 v6 v-8 a1.1 1.1 0 0 1 2.2 0 v8 v-7.2 a1.1 1.1 0 0 1 2.2 0 v7.5 v-5.5 a1.1 1.1 0 0 1 2.2 0 v8 a6 6 0 0 1 -6 6 h-1 a5 5 0 0 1 -4.5 -3z" fill="#d8d8d8"/>
<circle cx="768.2" cy="106.9" r="6.2" fill="#d8d8d8"/><path d="M765.5 110.5 l-5.6 5" stroke="#d8d8d8" stroke-width="2"/><path d="M768.2 103.4 v7 M764.7 106.9 h7" stroke="#262626" stroke-width="1.4"/>
<path d="M817.5 134.8 L816.8 119" stroke="#3b8ee5" stroke-width="2.2"/>
<path d="M817.5 134.8 L836 123" stroke="#6c8e23" stroke-width="2.2"/>
<path d="M817.5 134.8 L834 147" stroke="#ee3852" stroke-width="2.2"/>
<circle cx="794.9" cy="117.9" r="6.3" fill="#9b3244"/>
<circle cx="793.4" cy="151.4" r="6.3" fill="#8ac620"/>
<circle cx="817.5" cy="157.2" r="6.3" fill="#2c5f9e"/>
<circle cx="816.8" cy="112.2" r="7.3" fill="#3b8ee5"/>
<circle cx="840.5" cy="118.5" r="7.3" fill="#6c8e23"/>
<circle cx="839.4" cy="151.6" r="7.3" fill="#ee3852"/>
<text x="816.8" y="116.2" font-size="10.5" fill="#1a1a1a" stroke="#1a1a1a" stroke-width="0.5" text-anchor="middle">Z</text>
<text x="840.5" y="122.5" font-size="10.5" fill="#1a1a1a" stroke="#1a1a1a" stroke-width="0.5" text-anchor="middle">Y</text>
<text x="839.4" y="155.6" font-size="10.5" fill="#1a1a1a" stroke="#1a1a1a" stroke-width="0.5" text-anchor="middle">X</text>
<path d="M867 99 h-4 a4 4 0 0 0 -4 4 v6 a4 4 0 0 0 4 4 h4z" fill="#2b2b2b"/><path d="M865 103 l-3 3 l3 3" stroke="#cccccc" stroke-width="1" fill="none"/>
</g>
<g clip-path="url(#ol)">
<rect x="870.00" y="60.00" width="179.00" height="168.00" rx="0.00" fill="#282828" />
<rect x="870.00" y="60.00" width="179.00" height="25.00" rx="0.00" fill="#3d3d3d" />
<rect x="870.00" y="105.70" width="179.00" height="20.10" rx="0.00" fill="#2d2d2d" />
<rect x="870.00" y="145.80" width="179.00" height="20.10" rx="0.00" fill="#2d2d2d" />
<rect x="870.00" y="186.00" width="179.00" height="20.10" rx="0.00" fill="#2d2d2d" />
<rect x="963.10" y="85.00" width="1.00" height="143.00" rx="0.00" fill="#1f1f1f" />
<rect x="983.20" y="85.00" width="1.00" height="143.00" rx="0.00" fill="#1f1f1f" />
<rect x="1003.20" y="85.00" width="1.00" height="143.00" rx="0.00" fill="#1f1f1f" />
<rect x="1023.20" y="85.00" width="1.00" height="143.00" rx="0.00" fill="#1f1f1f" />
<rect x="879.30" y="63.30" width="29.70" height="17.80" rx="4.00" fill="#2b2b2b" />
<g fill="#dddddd"><rect x="884" y="65.5" width="5" height="3"/><rect x="888" y="70.5" width="7.5" height="3"/><rect x="888" y="75.5" width="7.5" height="3"/></g><path d="M885.5 68 v9 h2.5 M885.5 72 h2.5" stroke="#dddddd" stroke-width="0.9" fill="none"/>
<path d="M898.5 71 l3 3 l3 -3" stroke="#cccccc" stroke-width="1.1" fill="none"/>
<rect x="916.40" y="63.30" width="29.70" height="17.80" rx="4.00" fill="#2b2b2b" />
<g fill="none" stroke="#dddddd" stroke-width="0.9"><path d="M921.5 69 v9.5 h9.5"/><path d="M923.5 67 v9.5 h9.5"/></g><rect x="925.5" y="65" width="9" height="9" fill="#dddddd"/><path d="M926.5 73 l3 -4 l2 2 l1.5 -1.5 l1.5 3.5 z" fill="#2b2b2b"/>
<path d="M936 71 l3 3 l3 -3" stroke="#cccccc" stroke-width="1.1" fill="none"/>
<rect x="964.00" y="63.30" width="96.00" height="17.80" rx="4.00" fill="#1d1d1d" />
<circle cx="976.5" cy="70.5" r="4.2" fill="none" stroke="#dddddd" stroke-width="1.2"/><path d="M973.5 73.5 l-4.5 4.5" stroke="#dddddd" stroke-width="1.5"/>
<g fill="none" stroke="#e0e0e0" stroke-width="1.1"><rect x="893.6" y="90.5" width="12.5" height="3.2"/><path d="M894.6 93.7 v8.5 h10.5 v-8.5"/></g><rect x="898" y="96" width="3.5" height="1.3" fill="#e0e0e0"/>
<g clip-path="url(#olt)">
<text x="914.70" y="101.00" font-size="11.70" fill="#dddddd" stroke="#dddddd" stroke-width="0.1" textLength="79.02" lengthAdjust="spacingAndGlyphs">Scene Collection</text>
</g>
<path d="M897 113.5 h5.5 l-2.75 5z" fill="#bbbbbb"/>
<circle cx="920" cy="116.5" r="9" fill="#6c7589"/>
<g fill="none" stroke="#ffffff" stroke-width="1.1"><rect x="914" y="110.5" width="12" height="3"/><path d="M915 113.5 v8 h10 v-8"/></g><rect x="918.5" y="116" width="3" height="1.2" fill="#ffffff"/>
<clipPath id="olt"><rect x="870" y="85" width="93" height="143"/></clipPath><g clip-path="url(#olt)">
<text x="934.40" y="120.80" font-size="11.70" fill="#ffffff" stroke="#ffffff" stroke-width="0.1" textLength="46.24" lengthAdjust="spacingAndGlyphs">Collection</text>
<path d="M919.5 126 V176.5 M919.5 136.5 H930 M919.5 156.5 H930 M919.5 176.5 H930" stroke="#8a8a8a" stroke-width="1"/>
<path d="M917.5 133.5 l5 3 l-5 3z" fill="#8a8a8a" opacity="0.8"/>
<path d="M917.5 153.5 l5 3 l-5 3z" fill="#8a8a8a" opacity="0.8"/>
<path d="M917.5 173.5 l5 3 l-5 3z" fill="#8a8a8a" opacity="0.8"/>
<g fill="#b06a30"><circle cx="936" cy="131.5" r="3"/><circle cx="942.5" cy="131" r="3.3"/><rect x="933" y="135" width="11" height="5.5" rx="1"/><path d="M944 136 l4 -1.5 v6 l-4 -1.5z"/></g>
<text x="954.20" y="140.50" font-size="11.70" fill="#8a8a8a" stroke="#8a8a8a" stroke-width="0.1" textLength="39.32" lengthAdjust="spacingAndGlyphs">Camera</text>
<circle cx="939.5" cy="156" r="9" fill="#a8652a"/><path d="M933 150.5 h13 l-6.5 11.5z" fill="none" stroke="#ffa02a" stroke-width="2"/>
<text x="954.20" y="160.50" font-size="11.70" fill="#ffffff" stroke="#ffffff" stroke-width="0.1" textLength="26.43" lengthAdjust="spacingAndGlyphs">Cube</text>
<circle cx="939.5" cy="174" r="6" fill="#9a5a2a"/><path d="M937 181 h5 M937.5 183 h4" stroke="#9a5a2a" stroke-width="1"/>
<text x="954.20" y="180.50" font-size="11.70" fill="#8a8a8a" stroke="#8a8a8a" stroke-width="0.1" textLength="23.98" lengthAdjust="spacingAndGlyphs">Light</text>
</g>
<path d="M966 116.0 q7 -7 14 0 q-7 7 -14 0z" fill="none" stroke="#dddddd" stroke-width="1.1"/><circle cx="973" cy="115.3" r="2.5" fill="#dddddd"/>
<path d="M988 110.5 l9.5 3.5 l-4.2 1.2 l-1.8 4.5z" fill="#dddddd"/>
<rect x="1006.5" y="110.5" width="11.5" height="8.5" fill="none" stroke="#dddddd" stroke-width="1.3"/><rect x="1008" y="112.0" width="8.5" height="5.5" fill="#dddddd"/><path d="M1012.2 119.0 v2 M1009 121.0 h6.5" stroke="#dddddd" stroke-width="1"/>
<path d="M1025.5 111.5 h3 l1.5 -2 h5 l1.5 2 h2.5 v9 h-13.5z" fill="#dddddd"/><circle cx="1032.3" cy="116.5" r="3.3" fill="#282828"/><circle cx="1032.3" cy="116.5" r="1.8" fill="#dddddd"/>
<path d="M967 135.0 q6 5 12 0" fill="none" stroke="#bbbbbb" stroke-width="1"/>
<path d="M988 130.5 l9.5 3.5 l-4.2 1.2 l-1.8 4.5z" fill="#dddddd"/>
<rect x="1006.5" y="130.5" width="11.5" height="8.5" fill="none" stroke="#dddddd" stroke-width="1.3"/><rect x="1008" y="132.0" width="8.5" height="5.5" fill="#dddddd"/><path d="M1012.2 139.0 v2 M1009 141.0 h6.5" stroke="#dddddd" stroke-width="1"/>
<path d="M1025.5 131.5 h3 l1.5 -2 h5 l1.5 2 h2.5 v9 h-13.5z" fill="#dddddd"/><circle cx="1032.3" cy="136.5" r="3.3" fill="#282828"/><circle cx="1032.3" cy="136.5" r="1.8" fill="#dddddd"/>
<path d="M966 156.0 q7 -7 14 0 q-7 7 -14 0z" fill="none" stroke="#dddddd" stroke-width="1.1"/><circle cx="973" cy="155.3" r="2.5" fill="#dddddd"/>
<path d="M988 150.5 l9.5 3.5 l-4.2 1.2 l-1.8 4.5z" fill="#dddddd"/>
<rect x="1006.5" y="150.5" width="11.5" height="8.5" fill="none" stroke="#dddddd" stroke-width="1.3"/><rect x="1008" y="152.0" width="8.5" height="5.5" fill="#dddddd"/><path d="M1012.2 159.0 v2 M1009 161.0 h6.5" stroke="#dddddd" stroke-width="1"/>
<path d="M1025.5 151.5 h3 l1.5 -2 h5 l1.5 2 h2.5 v9 h-13.5z" fill="#dddddd"/><circle cx="1032.3" cy="156.5" r="3.3" fill="#282828"/><circle cx="1032.3" cy="156.5" r="1.8" fill="#dddddd"/>
<path d="M967 175.0 q6 5 12 0" fill="none" stroke="#bbbbbb" stroke-width="1"/>
<path d="M988 170.5 l9.5 3.5 l-4.2 1.2 l-1.8 4.5z" fill="#dddddd"/>
<rect x="1006.5" y="170.5" width="11.5" height="8.5" fill="none" stroke="#dddddd" stroke-width="1.3"/><rect x="1008" y="172.0" width="8.5" height="5.5" fill="#dddddd"/><path d="M1012.2 179.0 v2 M1009 181.0 h6.5" stroke="#dddddd" stroke-width="1"/>
<path d="M1025.5 171.5 h3 l1.5 -2 h5 l1.5 2 h2.5 v9 h-13.5z" fill="#dddddd"/><circle cx="1032.3" cy="176.5" r="3.3" fill="#282828"/><circle cx="1032.3" cy="176.5" r="1.8" fill="#dddddd"/>
</g>
<g clip-path="url(#pp)">
<rect x="870.00" y="231.00" width="179.00" height="354.00" rx="0.00" fill="#424242" />
<rect x="870.00" y="231.00" width="179.00" height="25.00" rx="0.00" fill="#3d3d3d" />
<rect x="870.00" y="256.00" width="28.00" height="329.00" rx="0.00" fill="#232323" />
<rect x="879.40" y="233.80" width="29.80" height="18.80" rx="4.00" fill="#2b2b2b" />
<g fill="#dddddd"><rect x="883" y="236.5" width="14" height="5.5" rx="2.75"/><rect x="883" y="244" width="14" height="5.5" rx="2.75"/></g><rect x="889" y="237.5" width="6.5" height="3.5" rx="1.5" fill="#2b2b2b"/><rect x="891" y="245" width="4.5" height="3.5" rx="1.5" fill="#2b2b2b"/>
<path d="M900 242 l3 3 l3 -3" stroke="#cccccc" stroke-width="1.1" fill="none"/>
<g stroke="#dddddd" stroke-width="1" fill="none"><path d="M925 240 v-3 h3 M935 237 h3 v3 M938 249 v3 h-3 M928 252 h-3 v-3"/></g><rect x="927.5" y="239.5" width="8" height="10" fill="#dddddd"/><path d="M929.5 240 v9 M931.5 240 v9 M933.5 240 v9" stroke="#999" stroke-width="0.6"/>
<text x="947.20" y="247.50" font-size="11.70" fill="#e6e6e6" stroke="#e6e6e6" stroke-width="0.1" textLength="25.11" lengthAdjust="spacingAndGlyphs">Cube</text>
<path d="M1030 251 l5 -5 M1031.5 241 l7.5 7.5 M1034 238 l6 6 M1034 238 l-2.5 3 M1040 244 l-3 2.5" stroke="#cccccc" stroke-width="1.1" fill="none"/>
<rect x="871.80" y="265.30" width="26.20" height="27.00" rx="4.00" fill="#2b2b2b" />
<rect x="894.00" y="265.30" width="4.00" height="27.00" rx="0.00" fill="#2b2b2b" />
<rect x="871.80" y="300.70" width="26.20" height="26.20" rx="4.00" fill="#2b2b2b" />
<rect x="894.00" y="300.70" width="4.00" height="26.20" rx="0.00" fill="#2b2b2b" />
<rect x="871.80" y="329.00" width="26.20" height="25.80" rx="4.00" fill="#2b2b2b" />
<rect x="894.00" y="329.00" width="4.00" height="25.80" rx="0.00" fill="#2b2b2b" />
<rect x="871.80" y="356.90" width="26.20" height="25.80" rx="4.00" fill="#2b2b2b" />
<rect x="894.00" y="356.90" width="4.00" height="25.80" rx="0.00" fill="#2b2b2b" />
<rect x="871.80" y="384.80" width="26.20" height="26.20" rx="4.00" fill="#2b2b2b" />
<rect x="894.00" y="384.80" width="4.00" height="26.20" rx="0.00" fill="#2b2b2b" />
<rect x="871.80" y="412.80" width="26.20" height="26.70" rx="4.00" fill="#2b2b2b" />
<rect x="894.00" y="412.80" width="4.00" height="26.70" rx="0.00" fill="#2b2b2b" />
<rect x="871.80" y="449.20" width="26.20" height="25.70" rx="4.00" fill="#474747" />
<rect x="894.00" y="449.20" width="4.00" height="25.70" rx="0.00" fill="#474747" />
<rect x="871.80" y="476.90" width="26.20" height="26.80" rx="4.00" fill="#2b2b2b" />
<rect x="894.00" y="476.90" width="4.00" height="26.80" rx="0.00" fill="#2b2b2b" />
<rect x="871.80" y="505.60" width="26.20" height="25.80" rx="4.00" fill="#2b2b2b" />
<rect x="894.00" y="505.60" width="4.00" height="25.80" rx="0.00" fill="#2b2b2b" />
<rect x="871.80" y="533.40" width="26.20" height="26.70" rx="4.00" fill="#2b2b2b" />
<rect x="894.00" y="533.40" width="4.00" height="26.70" rx="0.00" fill="#2b2b2b" />
<rect x="871.80" y="561.50" width="26.20" height="23.40" rx="4.00" fill="#2b2b2b" />
<rect x="894.00" y="561.50" width="4.00" height="23.40" rx="0.00" fill="#2b2b2b" />
<path d="M880.5 271.8 v5.5" stroke="#dddddd" stroke-width="1.3"/><path d="M878.3 277.8 h4.4 v3 a2.2 2.2 0 0 1 -4.4 0z" fill="#dddddd"/><path d="M887.8 276.8 v9" stroke="#dddddd" stroke-width="2.2" stroke-linecap="round"/><path d="M884.8 272.3 v2.5 a3 3 0 0 0 6 0 v-2.5 l-1.6 -0.8 v2.8 h-2.8 v-2.8z" fill="#dddddd"/>
<rect x="879" y="310.8" width="13" height="9" fill="none" stroke="#dddddd" stroke-width="1.1"/><circle cx="889" cy="314.8" r="1" fill="#dddddd"/><path d="M881 313.8 h5 M881 316.8 h5" stroke="#dddddd" stroke-width="1"/><path d="M883 310.8 l5 -4" stroke="#dddddd" stroke-width="1"/>
<rect x="878.5" y="336.9" width="14" height="4" fill="#dddddd"/><path d="M880.5 340.9 v6 h10 v-6" stroke="#dddddd" stroke-width="1.1" fill="none"/><rect x="881" y="334.9" width="9" height="5" fill="#dddddd"/>
<g fill="none" stroke="#dddddd" stroke-width="0.9"><path d="M879 365.8 v9.5 h9.5"/><path d="M881 363.8 v9.5 h9.5"/></g><rect x="883" y="361.8" width="9" height="9" fill="#dddddd"/><path d="M884 369.8 l3 -4 l2 2 l1.5 -1.5 l1.5 3.5 z" fill="#2b2b2b"/>
<path d="M882 391.4 C880.3 394.4 878.5 396.9 878.5 399.4 a3.8 3.8 0 0 0 7.6 0 C886.1 396.9 883.7 394.4 882 391.4 z" fill="#dddddd"/><circle cx="888.3" cy="392.4" r="1.7" fill="#dddddd"/><circle cx="886.5" cy="400.4" r="3" fill="#2b2b2b" stroke="#dddddd" stroke-width="1.1"/>
<circle cx="885" cy="426.1" r="6" fill="none" stroke="#cccccc" stroke-width="1.2"/><path d="M881 423.6 q2 -2 4 0 q1 2 -1 3 q2 1 3 3 l1 1.5" stroke="#bbbbbb" stroke-width="2" fill="none"/><path d="M878 433.1 L892 419.1" stroke="#cccccc" stroke-width="1"/>
<g stroke="#eeeeee" stroke-width="1" fill="none"><path d="M878.5 458.0 v-3 h3 M888.5 455.0 h3 v3 M891.5 466.0 v3 h-3 M881.5 469.0 h-3 v-3"/></g><rect x="881" y="458.0" width="8" height="8" fill="#eeeeee"/>
<path d="M890.5 484.8 a2.2 2.2 0 0 0 -3 -0.5 l-7.5 5 a5 5 0 1 0 7 6 z" fill="none" stroke="#cccccc" stroke-width="1.2"/><circle cx="883.5" cy="492.8" r="2.2" fill="none" stroke="#cccccc" stroke-width="1.3"/><circle cx="889" cy="486.1" r="0.9" fill="#cccccc"/>
<path d="M879.5 524.5 l6.5 -6.5" stroke="#dddddd" stroke-width="2.6" stroke-linecap="round"/><path d="M886 518.0 a4.3 4.3 0 1 0 5.5 -5.5 l-2.8 2.8 l-2.2 -0.5 l-0.5 -2.2 l2.8 -2.8 a4.3 4.3 0 0 0 -2.8 8.2z" fill="#dddddd"/>
<path d="M879.5 542.2 h11 l-5.5 9z" fill="none" stroke="#dddddd" stroke-width="1.1"/><rect x="877.8" y="540.5" width="3.5" height="3.5" fill="#2b2b2b" stroke="#dddddd" stroke-width="1"/><rect x="888.8" y="540.5" width="3.5" height="3.5" fill="#2b2b2b" stroke="#dddddd" stroke-width="1"/><rect x="883.2" y="550.0" width="3.5" height="3.5" fill="#2b2b2b" stroke="#dddddd" stroke-width="1"/>
<circle cx="885" cy="573.2" r="6.5" fill="#cfcfcf" stroke="#dddddd" stroke-width="1"/><path d="M885 573.2 V566.7 A6.5 6.5 0 0 0 878.5 573.2 Z" fill="#222222"/><path d="M885 573.2 V579.7 A6.5 6.5 0 0 0 891.5 573.2 Z" fill="#222222"/>
<rect x="907.00" y="265.10" width="135.00" height="17.90" rx="4.00" fill="#1d1d1d" />
<rect x="907.00" y="265.10" width="30.60" height="17.90" rx="4.00" fill="#2b2b2b" />
<rect x="933.00" y="265.10" width="4.60" height="17.90" rx="0.00" fill="#2b2b2b" />
<g stroke="#dddddd" stroke-width="1" fill="none"><path d="M911.5 271 v-3 h3 M922 268 h3 v3 M925 277 v3 h-3 M914.5 280 h-3 v-3"/></g><rect x="914" y="270.5" width="8" height="7.5" fill="#dddddd"/>
<path d="M928.5 273 l3 3 l3 -3" stroke="#cccccc" stroke-width="1.1" fill="none"/>
<text x="945.30" y="277.60" font-size="11.70" fill="#e6e6e6" stroke="#e6e6e6" stroke-width="0.1" textLength="24.51" lengthAdjust="spacingAndGlyphs">Cube</text>
<rect x="898.00" y="292.20" width="151.00" height="23.10" rx="0.00" fill="#474747" />
<path d="M907 301.5 h6.5 l-3.25 5.9z" fill="#bbbbbb"/>
<text x="920.60" y="308.40" font-size="12.00" fill="#dddddd" stroke="#dddddd" stroke-width="0.1" textLength="55.39" lengthAdjust="spacingAndGlyphs">Transform</text>
<rect x="1031.00" y="302.50" width="1.60" height="1.60" rx="0.00" fill="#1e1e1e" />
<rect x="1031.00" y="305.70" width="1.60" height="1.60" rx="0.00" fill="#1e1e1e" />
<rect x="1034.20" y="302.50" width="1.60" height="1.60" rx="0.00" fill="#1e1e1e" />
<rect x="1034.20" y="305.70" width="1.60" height="1.60" rx="0.00" fill="#1e1e1e" />
<rect x="1037.40" y="302.50" width="1.60" height="1.60" rx="0.00" fill="#1e1e1e" />
<rect x="1037.40" y="305.70" width="1.60" height="1.60" rx="0.00" fill="#1e1e1e" />
<rect x="1040.60" y="302.50" width="1.60" height="1.60" rx="0.00" fill="#1e1e1e" />
<rect x="1040.60" y="305.70" width="1.60" height="1.60" rx="0.00" fill="#1e1e1e" />
<rect x="898.00" y="315.30" width="151.00" height="270.00" rx="0.00" fill="#3d3d3d" />
<rect x="964.50" y="324.70" width="37.70" height="58.70" rx="4.00" fill="#585858" />
<rect x="964.50" y="343.10" width="37.70" height="0.80" rx="0.00" fill="#3d3d3d" />
<rect x="964.50" y="362.60" width="37.70" height="0.80" rx="0.00" fill="#3d3d3d" />
<rect x="964.50" y="386.50" width="37.70" height="58.40" rx="4.00" fill="#585858" />
<rect x="964.50" y="404.60" width="37.70" height="0.80" rx="0.00" fill="#3d3d3d" />
<rect x="964.50" y="425.10" width="37.70" height="0.80" rx="0.00" fill="#3d3d3d" />
<rect x="964.50" y="448.60" width="37.70" height="58.50" rx="4.00" fill="#585858" />
<rect x="964.50" y="466.90" width="37.70" height="0.80" rx="0.00" fill="#3d3d3d" />
<rect x="964.50" y="487.30" width="37.70" height="0.80" rx="0.00" fill="#3d3d3d" />
<text x="906.04" y="338.30" font-size="11.70" fill="#e0e0e0" stroke="#e0e0e0" stroke-width="0.1" textLength="47.95" lengthAdjust="spacingAndGlyphs">Location..</text>
<text x="975.62" y="338.30" font-size="11.70" fill="#e6e6e6" stroke="#e6e6e6" stroke-width="0.1" textLength="15.36" lengthAdjust="spacingAndGlyphs">0m</text>
<path d="M1006 334.6 v-4 a2.6 2.6 0 0 1 5.2 0 v1.5" stroke="#c8c8c8" stroke-width="1" fill="none"/><rect x="1009.5" y="333.6" width="7" height="5.5" fill="none" stroke="#c8c8c8" stroke-width="1"/><path d="M1012 335.6 h1.5 v1.5" stroke="#c8c8c8" stroke-width="0.8" fill="none"/>
<circle cx="1033.2" cy="334.1" r="1.8" fill="#dddddd"/>
<text x="946.62" y="357.45" font-size="11.70" fill="#e0e0e0" stroke="#e0e0e0" stroke-width="0.1" textLength="7.37" lengthAdjust="spacingAndGlyphs">Y</text>
<text x="975.62" y="357.45" font-size="11.70" fill="#e6e6e6" stroke="#e6e6e6" stroke-width="0.1" textLength="15.36" lengthAdjust="spacingAndGlyphs">0m</text>
<path d="M1006 353.8 v-4 a2.6 2.6 0 0 1 5.2 0 v1.5" stroke="#c8c8c8" stroke-width="1" fill="none"/><rect x="1009.5" y="352.8" width="7" height="5.5" fill="none" stroke="#c8c8c8" stroke-width="1"/><path d="M1012 354.8 h1.5 v1.5" stroke="#c8c8c8" stroke-width="0.8" fill="none"/>
<circle cx="1033.2" cy="353.2" r="1.8" fill="#dddddd"/>
<text x="947.26" y="377.40" font-size="11.70" fill="#e0e0e0" stroke="#e0e0e0" stroke-width="0.1" textLength="6.75" lengthAdjust="spacingAndGlyphs">Z</text>
<text x="975.62" y="377.40" font-size="11.70" fill="#e6e6e6" stroke="#e6e6e6" stroke-width="0.1" textLength="15.36" lengthAdjust="spacingAndGlyphs">0m</text>
<path d="M1006 373.7 v-4 a2.6 2.6 0 0 1 5.2 0 v1.5" stroke="#c8c8c8" stroke-width="1" fill="none"/><rect x="1009.5" y="372.7" width="7" height="5.5" fill="none" stroke="#c8c8c8" stroke-width="1"/><path d="M1012 374.7 h1.5 v1.5" stroke="#c8c8c8" stroke-width="0.8" fill="none"/>
<circle cx="1033.2" cy="373.2" r="1.8" fill="#dddddd"/>
<text x="906.68" y="399.95" font-size="11.70" fill="#e0e0e0" stroke="#e0e0e0" stroke-width="0.1" textLength="47.33" lengthAdjust="spacingAndGlyphs">Rotation..</text>
<text x="978.02" y="399.95" font-size="11.70" fill="#e6e6e6" stroke="#e6e6e6" stroke-width="0.1" textLength="10.57" lengthAdjust="spacingAndGlyphs">0°</text>
<path d="M1006 396.2 v-4 a2.6 2.6 0 0 1 5.2 0 v1.5" stroke="#c8c8c8" stroke-width="1" fill="none"/><rect x="1009.5" y="395.2" width="7" height="5.5" fill="none" stroke="#c8c8c8" stroke-width="1"/><path d="M1012 397.2 h1.5 v1.5" stroke="#c8c8c8" stroke-width="0.8" fill="none"/>
<circle cx="1033.2" cy="395.8" r="1.8" fill="#dddddd"/>
<text x="946.62" y="419.45" font-size="11.70" fill="#e0e0e0" stroke="#e0e0e0" stroke-width="0.1" textLength="7.37" lengthAdjust="spacingAndGlyphs">Y</text>
<text x="978.02" y="419.45" font-size="11.70" fill="#e6e6e6" stroke="#e6e6e6" stroke-width="0.1" textLength="10.57" lengthAdjust="spacingAndGlyphs">0°</text>
<path d="M1006 415.8 v-4 a2.6 2.6 0 0 1 5.2 0 v1.5" stroke="#c8c8c8" stroke-width="1" fill="none"/><rect x="1009.5" y="414.8" width="7" height="5.5" fill="none" stroke="#c8c8c8" stroke-width="1"/><path d="M1012 416.8 h1.5 v1.5" stroke="#c8c8c8" stroke-width="0.8" fill="none"/>
<circle cx="1033.2" cy="415.2" r="1.8" fill="#dddddd"/>
<text x="947.26" y="439.40" font-size="11.70" fill="#e0e0e0" stroke="#e0e0e0" stroke-width="0.1" textLength="6.75" lengthAdjust="spacingAndGlyphs">Z</text>
<text x="978.02" y="439.40" font-size="11.70" fill="#e6e6e6" stroke="#e6e6e6" stroke-width="0.1" textLength="10.57" lengthAdjust="spacingAndGlyphs">0°</text>
<path d="M1006 435.7 v-4 a2.6 2.6 0 0 1 5.2 0 v1.5" stroke="#c8c8c8" stroke-width="1" fill="none"/><rect x="1009.5" y="434.7" width="7" height="5.5" fill="none" stroke="#c8c8c8" stroke-width="1"/><path d="M1012 436.7 h1.5 v1.5" stroke="#c8c8c8" stroke-width="0.8" fill="none"/>
<circle cx="1033.2" cy="435.2" r="1.8" fill="#dddddd"/>
<text x="915.88" y="462.15" font-size="11.70" fill="#e0e0e0" stroke="#e0e0e0" stroke-width="0.1" textLength="38.10" lengthAdjust="spacingAndGlyphs">Scale X</text>
<text x="978.68" y="462.15" font-size="11.70" fill="#e6e6e6" stroke="#e6e6e6" stroke-width="0.1" textLength="9.22" lengthAdjust="spacingAndGlyphs">1.</text>
<path d="M1006 458.5 v-4 a2.6 2.6 0 0 1 5.2 0 v1.5" stroke="#c8c8c8" stroke-width="1" fill="none"/><rect x="1009.5" y="457.5" width="7" height="5.5" fill="none" stroke="#c8c8c8" stroke-width="1"/><path d="M1012 459.5 h1.5 v1.5" stroke="#c8c8c8" stroke-width="0.8" fill="none"/>
<circle cx="1033.2" cy="458.0" r="1.8" fill="#dddddd"/>
<text x="946.62" y="481.70" font-size="11.70" fill="#e0e0e0" stroke="#e0e0e0" stroke-width="0.1" textLength="7.37" lengthAdjust="spacingAndGlyphs">Y</text>
<text x="978.68" y="481.70" font-size="11.70" fill="#e6e6e6" stroke="#e6e6e6" stroke-width="0.1" textLength="9.22" lengthAdjust="spacingAndGlyphs">1.</text>
<path d="M1006 478.0 v-4 a2.6 2.6 0 0 1 5.2 0 v1.5" stroke="#c8c8c8" stroke-width="1" fill="none"/><rect x="1009.5" y="477.0" width="7" height="5.5" fill="none" stroke="#c8c8c8" stroke-width="1"/><path d="M1012 479.0 h1.5 v1.5" stroke="#c8c8c8" stroke-width="0.8" fill="none"/>
<circle cx="1033.2" cy="477.5" r="1.8" fill="#dddddd"/>
<text x="947.26" y="501.60" font-size="11.70" fill="#e0e0e0" stroke="#e0e0e0" stroke-width="0.1" textLength="6.75" lengthAdjust="spacingAndGlyphs">Z</text>
<text x="978.68" y="501.60" font-size="11.70" fill="#e6e6e6" stroke="#e6e6e6" stroke-width="0.1" textLength="9.22" lengthAdjust="spacingAndGlyphs">1.</text>
<path d="M1006 497.9 v-4 a2.6 2.6 0 0 1 5.2 0 v1.5" stroke="#c8c8c8" stroke-width="1" fill="none"/><rect x="1009.5" y="496.9" width="7" height="5.5" fill="none" stroke="#c8c8c8" stroke-width="1"/><path d="M1012 498.9 h1.5 v1.5" stroke="#c8c8c8" stroke-width="0.8" fill="none"/>
<circle cx="1033.2" cy="497.4" r="1.8" fill="#dddddd"/>
<rect x="964.70" y="513.90" width="38.10" height="18.70" rx="4.00" fill="#2b2b2b" />
<text x="972.50" y="527.20" font-size="11.70" fill="#e6e6e6" stroke="#e6e6e6" stroke-width="0.1" textLength="12.69" lengthAdjust="spacingAndGlyphs">XY</text>
<path d="M992.5 522 l3 3 l3 -3" stroke="#cccccc" stroke-width="1.1" fill="none"/>
<text x="905.40" y="527.00" font-size="11.70" fill="#e0e0e0" stroke="#e0e0e0" stroke-width="0.1" textLength="48.61" lengthAdjust="spacingAndGlyphs">Rotation..</text>
<circle cx="1033.2" cy="523.2" r="1.8" fill="#dddddd"/>
<path d="M921.5 550.5 v6.5 l5 -3.25z" fill="#bbbbbb"/>
<text x="934.10" y="558.00" font-size="11.70" fill="#dddddd" stroke="#dddddd" stroke-width="0.1" textLength="78.91" lengthAdjust="spacingAndGlyphs">Delta Transform</text>
<rect x="898.00" y="564.90" width="151.00" height="21.00" rx="0.00" fill="#474747" />
<path d="M907.5 573 v6.5 l5 -3.25z" fill="#bbbbbb"/>
<text x="920.50" y="580.60" font-size="12.00" fill="#dddddd" stroke="#dddddd" stroke-width="0.1" textLength="50.99" lengthAdjust="spacingAndGlyphs">Relations</text>
<rect x="1031.00" y="574.50" width="1.60" height="1.60" rx="0.00" fill="#1e1e1e" />
<rect x="1031.00" y="577.70" width="1.60" height="1.60" rx="0.00" fill="#1e1e1e" />
<rect x="1034.20" y="574.50" width="1.60" height="1.60" rx="0.00" fill="#1e1e1e" />
<rect x="1034.20" y="577.70" width="1.60" height="1.60" rx="0.00" fill="#1e1e1e" />
<rect x="1037.40" y="574.50" width="1.60" height="1.60" rx="0.00" fill="#1e1e1e" />
<rect x="1037.40" y="577.70" width="1.60" height="1.60" rx="0.00" fill="#1e1e1e" />
<rect x="1040.60" y="574.50" width="1.60" height="1.60" rx="0.00" fill="#1e1e1e" />
<rect x="1040.60" y="577.70" width="1.60" height="1.60" rx="0.00" fill="#1e1e1e" />
</g>
<g clip-path="url(#tl)">
<rect x="0.00" y="547.00" width="867.00" height="38.00" rx="0.00" fill="#363636" />
<rect x="0.00" y="572.00" width="867.00" height="13.00" rx="0.00" fill="#3a3a3a" />
<rect x="3.00" y="571.90" width="855.00" height="10.30" rx="5.00" fill="#5e5e5e" />
<rect x="9.20" y="550.60" width="30.40" height="18.60" rx="4.00" fill="#2b2b2b" />
<circle cx="19.5" cy="559.9" r="6.2" fill="#e8e8e8"/><path d="M21.5 555.5 l-4 4.4 l4 4.4" stroke="#2b2b2b" stroke-width="2" fill="none"/>
<path d="M28 558.5 l3 3 l3 -3" stroke="#cccccc" stroke-width="1.1" fill="none"/>
<rect x="45.80" y="550.60" width="127.40" height="18.60" rx="4.00" fill="#2b2b2b" />
<rect x="114.10" y="550.60" width="0.80" height="18.60" rx="0.00" fill="#242424" />
<text x="53.20" y="564.00" font-size="11.70" fill="#dddddd" stroke="#dddddd" stroke-width="0.1" textLength="44.97" lengthAdjust="spacingAndGlyphs">Playback</text>
<path d="M105 558.5 l3 3 l3 -3" stroke="#cccccc" stroke-width="1.1" fill="none"/>
<text x="122.00" y="564.00" font-size="11.70" fill="#dddddd" stroke="#dddddd" stroke-width="0.1" textLength="34.40" lengthAdjust="spacingAndGlyphs">Keying</text>
<path d="M164 558.5 l3 3 l3 -3" stroke="#cccccc" stroke-width="1.1" fill="none"/>
<text x="181.30" y="564.00" font-size="11.70" fill="#dddddd" stroke="#dddddd" stroke-width="0.1" textLength="23.97" lengthAdjust="spacingAndGlyphs">View</text>
<text x="221.00" y="564.00" font-size="11.70" fill="#dddddd" stroke="#dddddd" stroke-width="0.1" textLength="35.09" lengthAdjust="spacingAndGlyphs">Marker</text>
<rect x="351.90" y="551.20" width="18.10" height="17.60" rx="4.00" fill="#555555" />
<circle cx="361" cy="560" r="4" fill="#e8e8e8"/>
<rect x="377.20" y="551.20" width="117.70" height="17.60" rx="4.00" fill="#555555" />
<rect x="394.90" y="551.20" width="0.80" height="17.60" rx="0.00" fill="#3a3a3a" />
<rect x="414.90" y="551.20" width="0.80" height="17.60" rx="0.00" fill="#3a3a3a" />
<rect x="434.90" y="551.20" width="0.80" height="17.60" rx="0.00" fill="#3a3a3a" />
<rect x="454.80" y="551.20" width="0.80" height="17.60" rx="0.00" fill="#3a3a3a" />
<rect x="474.80" y="551.20" width="0.80" height="17.60" rx="0.00" fill="#3a3a3a" />
<g fill="#e0e0e0"><rect x="380.5" y="555" width="2.3" height="10"/><path d="M390.5 555 v10 l-7 -5z"/><path d="M405 555 v10 l-6.3 -5z M411.5 555 v10 l-6.3 -5z"/><path d="M430.2 553.6 v12.6 l-10.7 -6.3z"/><path d="M439.4 553.6 v12.6 l10.7 -6.3z"/><path d="M458.6 555 v10 l6.3 -5z M465 555 v10 l6.3 -5z"/><path d="M480.4 555 v10 l7 -5z"/><rect x="487.6" y="555" width="2.3" height="10"/></g>
<rect x="578.10" y="551.20" width="72.30" height="17.60" rx="4.00" fill="#555555" />
<text x="610.50" y="564.00" font-size="11.70" fill="#e6e6e6" stroke="#e6e6e6" stroke-width="0.1" textLength="4.51" lengthAdjust="spacingAndGlyphs">1</text>
<rect x="658.00" y="551.20" width="17.60" height="17.60" rx="4.00" fill="#555555" />
<circle cx="667" cy="561" r="5" fill="none" stroke="#dddddd" stroke-width="1.1"/><path d="M667 561 v-3 M665.5 554.5 h3 M667 554.5 v1.5" stroke="#dddddd" stroke-width="1.1"/>
<rect x="676.40" y="551.20" width="171.00" height="17.60" rx="4.00" fill="#555555" />
<rect x="676.40" y="551.20" width="4.00" height="17.60" rx="0.00" fill="#555555" />
<rect x="764.60" y="551.20" width="0.80" height="17.60" rx="0.00" fill="#3a3a3a" />
<text x="691.80" y="564.00" font-size="11.70" fill="#e6e6e6" stroke="#e6e6e6" stroke-width="0.1" textLength="27.20" lengthAdjust="spacingAndGlyphs">Start:</text>
<text x="742.50" y="564.00" font-size="11.70" fill="#e6e6e6" stroke="#e6e6e6" stroke-width="0.1" textLength="4.51" lengthAdjust="spacingAndGlyphs">1</text>
<text x="780.20" y="564.00" font-size="11.70" fill="#e6e6e6" stroke="#e6e6e6" stroke-width="0.1" textLength="20.80" lengthAdjust="spacingAndGlyphs">End:</text>
<text x="812.00" y="564.00" font-size="11.70" fill="#e6e6e6" stroke="#e6e6e6" stroke-width="0.1" textLength="20.31" lengthAdjust="spacingAndGlyphs">250</text>
<rect x="24.00" y="572.50" width="16.30" height="10.30" rx="1.00" fill="#5680c2" />
<text x="30.00" y="581.50" font-size="11.70" fill="#ffffff" stroke="#ffffff" stroke-width="0.1" textLength="4.51" lengthAdjust="spacingAndGlyphs">1</text>
<text x="90.96" y="580.80" font-size="12.00" fill="#111111" stroke="#111111" stroke-width="0.1" textLength="14.68" lengthAdjust="spacingAndGlyphs">20</text>
<text x="154.16" y="580.80" font-size="12.00" fill="#111111" stroke="#111111" stroke-width="0.1" textLength="14.68" lengthAdjust="spacingAndGlyphs">40</text>
<text x="217.36" y="580.80" font-size="12.00" fill="#111111" stroke="#111111" stroke-width="0.1" textLength="14.68" lengthAdjust="spacingAndGlyphs">60</text>
<text x="280.56" y="580.80" font-size="12.00" fill="#111111" stroke="#111111" stroke-width="0.1" textLength="14.68" lengthAdjust="spacingAndGlyphs">80</text>
<text x="340.09" y="580.80" font-size="12.00" fill="#111111" stroke="#111111" stroke-width="0.1" textLength="22.02" lengthAdjust="spacingAndGlyphs">100</text>
<text x="403.29" y="580.80" font-size="12.00" fill="#111111" stroke="#111111" stroke-width="0.1" textLength="22.02" lengthAdjust="spacingAndGlyphs">120</text>
<text x="466.49" y="580.80" font-size="12.00" fill="#111111" stroke="#111111" stroke-width="0.1" textLength="22.02" lengthAdjust="spacingAndGlyphs">140</text>
<text x="529.69" y="580.80" font-size="12.00" fill="#111111" stroke="#111111" stroke-width="0.1" textLength="22.02" lengthAdjust="spacingAndGlyphs">160</text>
<text x="592.89" y="580.80" font-size="12.00" fill="#111111" stroke="#111111" stroke-width="0.1" textLength="22.02" lengthAdjust="spacingAndGlyphs">180</text>
<text x="656.09" y="580.80" font-size="12.00" fill="#111111" stroke="#111111" stroke-width="0.1" textLength="22.02" lengthAdjust="spacingAndGlyphs">200</text>
<text x="719.29" y="580.80" font-size="12.00" fill="#111111" stroke="#111111" stroke-width="0.1" textLength="22.02" lengthAdjust="spacingAndGlyphs">220</text>
<text x="782.49" y="580.80" font-size="12.00" fill="#111111" stroke="#111111" stroke-width="0.1" textLength="22.02" lengthAdjust="spacingAndGlyphs">240</text>
<circle cx="13.7" cy="576.8" r="4" fill="#4a4a4a"/>
<circle cx="853.9" cy="576.5" r="3.9" fill="#4a4a4a"/>
</g>
<rect x="0.00" y="586.00" width="1051.00" height="20.00" rx="0.00" fill="#2b2b2b" />
<rect x="12.9" y="590.5" width="9" height="13" rx="4" fill="none" stroke="#cccccc" stroke-width="1"/>
<path d="M13.4 591.0 h4 v5 h-4.5 v-2 a3 3 0 0 1 0.5 -3z" fill="#cccccc"/>
<text x="34.60" y="600.10" font-size="11.70" fill="#bcbcbc" stroke="#bcbcbc" stroke-width="0.1" textLength="105.89" lengthAdjust="spacingAndGlyphs">Select or Deselect All</text>
<rect x="152.7" y="590.5" width="9" height="13" rx="4" fill="none" stroke="#cccccc" stroke-width="1"/>
<path d="M153.2 591.0 h4 v5 h-4.5 v-2 a3 3 0 0 1 0.5 -3z" fill="#cccccc"/>
<path d="M165.5 591 v4 M167.5 590 v6" stroke="#cccccc" stroke-width="0.8"/>
<text x="176.40" y="600.10" font-size="11.70" fill="#bcbcbc" stroke="#bcbcbc" stroke-width="0.1" textLength="52.40" lengthAdjust="spacingAndGlyphs">Box Select</text>
<rect x="248.5" y="590.5" width="9" height="13" rx="4" fill="none" stroke="#cccccc" stroke-width="1"/>
<rect x="252.0" y="593.0" width="2" height="5" rx="1" fill="#cccccc"/>
<text x="270.60" y="600.10" font-size="11.70" fill="#bcbcbc" stroke="#bcbcbc" stroke-width="0.1" textLength="59.96" lengthAdjust="spacingAndGlyphs">Rotate View</text>
<rect x="485.0" y="590.5" width="9" height="13" rx="4" fill="none" stroke="#cccccc" stroke-width="1"/>
<path d="M493.5 591.0 h-4 v5 h4.5 v-2 a3 3 0 0 0 -0.5 -3z" fill="#cccccc"/>
<text x="506.40" y="600.10" font-size="11.70" fill="#bcbcbc" stroke="#bcbcbc" stroke-width="0.1" textLength="49.78" lengthAdjust="spacingAndGlyphs">Call Menu</text>
<text x="746.40" y="600.10" font-size="11.70" fill="#bcbcbc" stroke="#bcbcbc" stroke-width="0.1" textLength="285.39" lengthAdjust="spacingAndGlyphs">Collection | Cube | Verts:8 | Faces:6 | Tris:12 | Objects:1/1</text>
<text x="1038.00" y="600.10" font-size="11.70" fill="#bcbcbc" stroke="#bcbcbc" stroke-width="0.1" textLength="80.29" lengthAdjust="spacingAndGlyphs">| Mem: 23.4 MiB</text>
</svg></body></html>
